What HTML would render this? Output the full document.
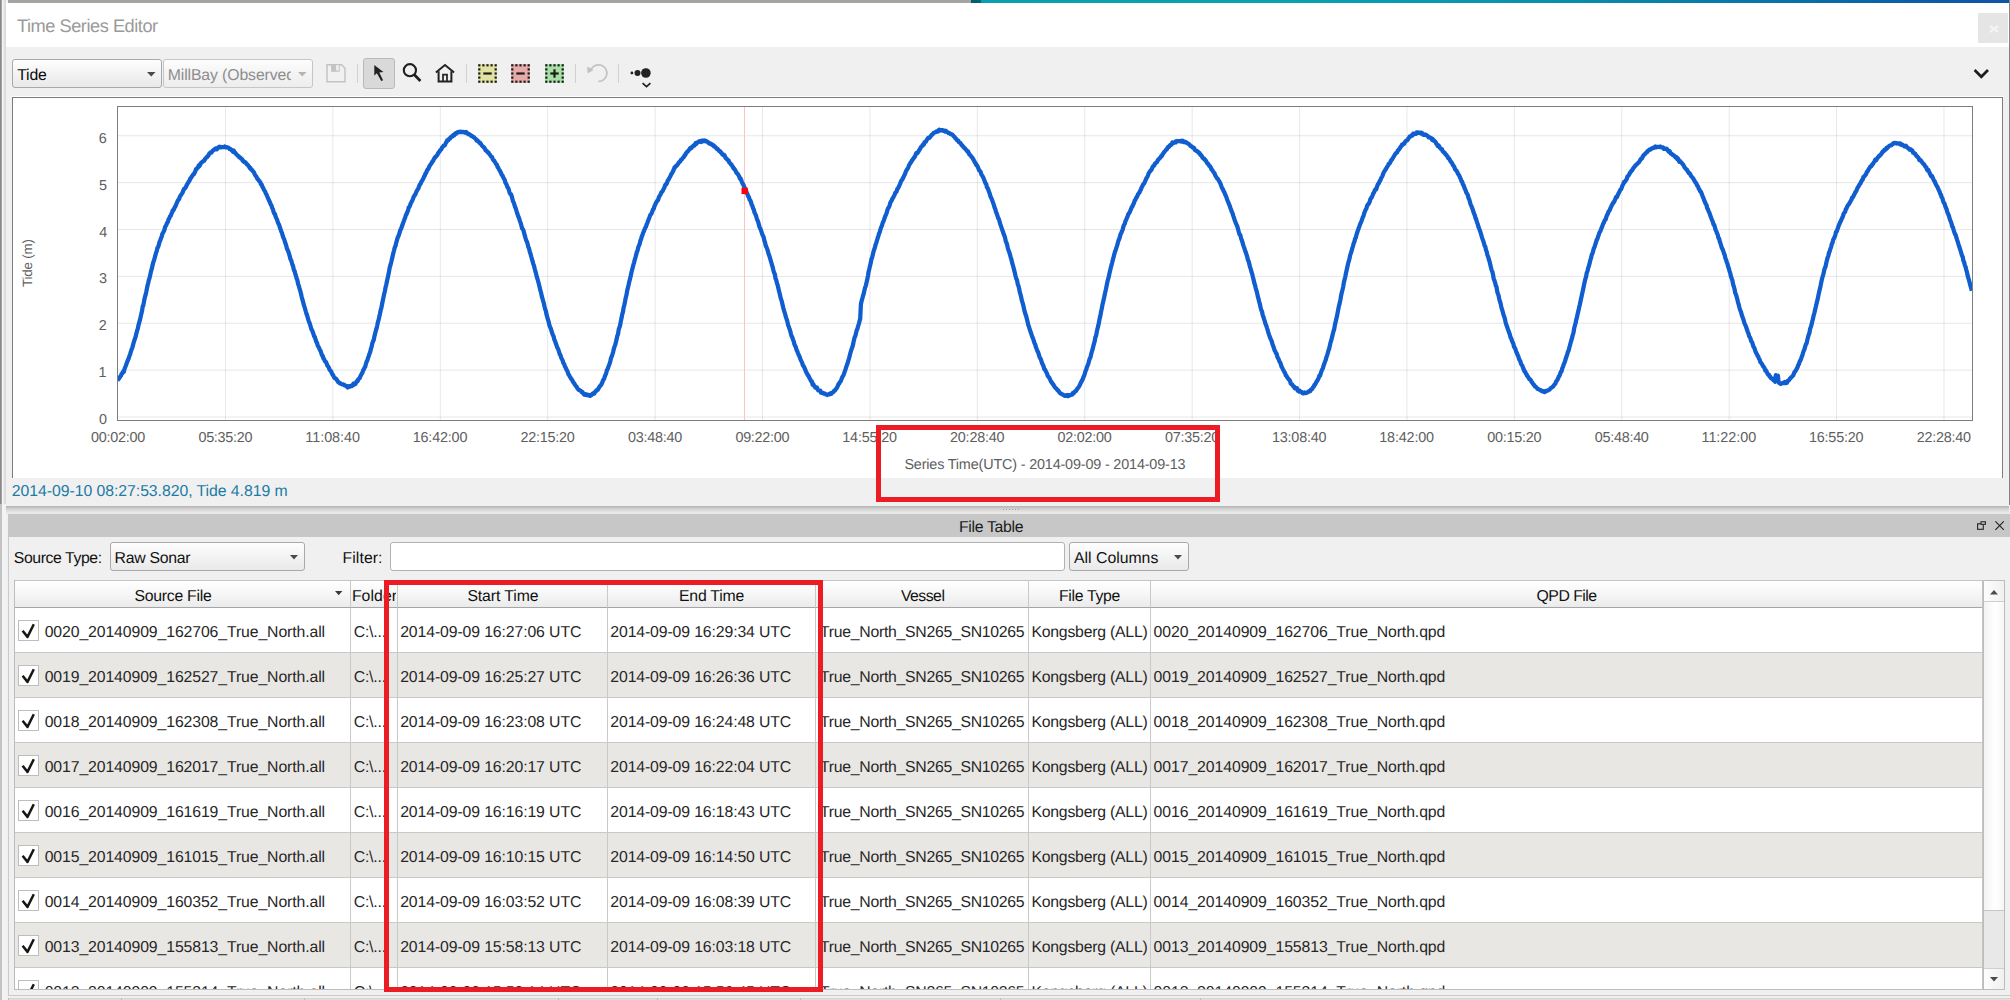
<!DOCTYPE html>
<html lang="en"><head><meta charset="utf-8"><title>Time Series Editor</title>
<style>
html,body{margin:0;padding:0;background:#f0f0f0;overflow:hidden;}
body{width:2010px;height:1000px;overflow:hidden;font-family:"Liberation Sans", sans-serif;text-rendering:geometricPrecision;}
#root{position:relative;width:2010px;height:1000px;overflow:hidden;background:#f0f0f0;}
#root div,#root span,#root svg{box-sizing:border-box;}
.combo{position:absolute;border:1px solid #a9a9a9;border-radius:3px;background:linear-gradient(#fefefe,#f3f3f3 50%,#e9e9e9);}
.hdr{position:absolute;top:580px;height:28px;background:linear-gradient(#ffffff,#f6f6f6 50%,#ebebeb);border-right:1px solid #c9c9c9;border-bottom:1px solid #a5a5a5;border-top:1px solid #c4c4c4;}
.row{position:absolute;left:15px;width:1968px;height:45px;border-bottom:1px solid #c8c8c8;}
.vl{position:absolute;top:608px;width:1px;height:381px;background:#c9c9c9;}
.cb{position:absolute;left:18px;width:21px;height:21px;background:#fff;border:1px solid #bdbdbd;}
</style></head><body><div id="root">
<div style="position:absolute;left:0px;top:0px;width:1px;height:504px;background:#8a8a8a;"></div>
<div style="position:absolute;left:1px;top:0px;width:1px;height:504px;background:#a0a0a0;"></div>
<div style="position:absolute;left:2px;top:0px;width:4px;height:504px;background:linear-gradient(90deg,#fbfbfb,#ececec 35%,#e0e0e0 65%,#d6d6d6);"></div>
<div style="position:absolute;left:0px;top:504px;width:2px;height:496px;background:#c4c4c4;"></div>
<div style="position:absolute;left:2px;top:504px;width:4px;height:496px;background:#f3f3f3;"></div>
<div style="position:absolute;left:6px;top:0px;width:2px;height:3px;background:#f4f4f4;"></div>
<div style="position:absolute;left:8px;top:0px;width:963px;height:3px;background:#a3a6a0;"></div>
<div style="position:absolute;left:971px;top:0px;width:1039px;height:3px;background:linear-gradient(90deg,#015f6f 0,#015f6f 0.9%,#0a9fb0 1%,#08a2b2 30%,#0a90ac 55%,#0872a8 78%,#0c5ca6 92%,#1254a4 100%);"></div>
<div style="position:absolute;left:2009px;top:0px;width:1px;height:505px;background:#868686;"></div>
<div style="position:absolute;left:6px;top:3px;width:2003px;height:44px;background:#ffffff;"></div>
<span style="position:absolute;left:17.0px;top:16.00px;font-size:18.2px;line-height:20px;color:#9a9a9a;white-space:pre;letter-spacing:-0.455px;">Time Series Editor</span>
<div style="position:absolute;left:1978px;top:13px;width:30px;height:30px;background:#e5e5e5;"></div>
<svg style="position:absolute;left:1987.5px;top:22.5px" width="12" height="12" viewBox="0 0 12 12"><path d="M1.9 2.9L10.1 9.1M10.1 2.9L1.9 9.1" stroke="#f4f4f4" stroke-width="2" fill="none"/></svg>
<div class="combo" style="left:12px;top:59px;width:150px;height:29px;"></div>
<span style="position:absolute;left:17.3px;top:66.00px;font-size:15.8px;line-height:20px;color:#0a0a0a;white-space:pre;letter-spacing:-0.235px;">Tide</span>
<svg style="position:absolute;left:146.75px;top:71.7px;overflow:visible" width="8.5" height="4.6" viewBox="0 0 8.5 4.6"><path d="M0 0H8.5L4.25 4.6Z" fill="#4a4a4a"/></svg>
<div class="combo" style="left:163px;top:59px;width:150px;height:29px;border-color:#c6c6c6;background:linear-gradient(#fdfdfd,#f4f4f4 50%,#ededed);"></div>
<div style="position:absolute;left:168px;top:62px;width:123.3px;height:24px;overflow:hidden;"><span style="position:absolute;left:-0.3px;top:4.00px;font-size:15.8px;line-height:20px;color:#8d8d8d;white-space:pre;letter-spacing:-0.113px;">MillBay (Observed)</span></div>
<svg style="position:absolute;left:297.75px;top:71.7px;overflow:visible" width="8.5" height="4.6" viewBox="0 0 8.5 4.6"><path d="M0 0H8.5L4.25 4.6Z" fill="#b4b4b4"/></svg>
<svg style="position:absolute;left:326px;top:64px;overflow:visible" width="20" height="18" viewBox="0 0 20 18"><path d="M1 0.8H15.6L19 4.2V17.8H1Z" fill="#f1f1f1" stroke="#c3c3c3" stroke-width="1.5"/><rect x="5.1" y="0.8" width="8.6" height="7" fill="#c4c4c4"/><rect x="10.2" y="1.2" width="2.5" height="5.3" fill="#f3f3f3"/></svg>
<div style="position:absolute;left:357px;top:64px;width:1px;height:19px;background:#d0d0d0;"></div>
<div style="position:absolute;left:363px;top:58px;width:32px;height:31px;background:#d9d9d9;border:1px solid #b9b9b9;border-radius:3px;"></div>
<svg style="position:absolute;left:372px;top:64px;overflow:visible" width="13" height="18" viewBox="0 0 13 18"><path d="M2.3 0.9V11.6L4.9 9.2L9.2 17.1L11.1 16.2L7.3 8.6L11.4 8.1Z" fill="#222"/></svg>
<svg style="position:absolute;left:402px;top:63px;overflow:visible" width="20" height="20" viewBox="0 0 20 20"><circle cx="7.9" cy="7.2" r="6.1" fill="none" stroke="#1f1f1f" stroke-width="2.1"/><path d="M12.4 11.8L18.4 18" stroke="#1f1f1f" stroke-width="2.7" fill="none"/></svg>
<svg style="position:absolute;left:435px;top:63px;overflow:visible" width="20" height="20" viewBox="0 0 20 20"><path d="M0.9 9.6L10 2.1L19.1 9.6" fill="none" stroke="#222" stroke-width="1.9"/><path d="M3.6 8.2V18.4H16.4V8.2" fill="none" stroke="#222" stroke-width="2"/><path d="M8 18.4V11.7H12V18.4" fill="none" stroke="#222" stroke-width="1.7"/></svg>
<div style="position:absolute;left:466px;top:64px;width:1px;height:19px;background:#d0d0d0;"></div>
<svg style="position:absolute;left:478.4px;top:63.6px;overflow:visible" width="19" height="19" viewBox="0 0 19 19"><rect x="0.2" y="0.2" width="18.6" height="18.6" fill="#e1e1a3"/><rect x="0.2" y="0.2" width="2.2" height="2.2" fill="#1c1c1c"/><rect x="0.2" y="4.3" width="2.2" height="2.2" fill="#1c1c1c"/><rect x="0.2" y="8.4" width="2.2" height="2.2" fill="#1c1c1c"/><rect x="0.2" y="12.5" width="2.2" height="2.2" fill="#1c1c1c"/><rect x="0.2" y="16.6" width="2.2" height="2.2" fill="#1c1c1c"/><rect x="4.3" y="0.2" width="2.2" height="2.2" fill="#1c1c1c"/><rect x="4.3" y="16.6" width="2.2" height="2.2" fill="#1c1c1c"/><rect x="8.4" y="0.2" width="2.2" height="2.2" fill="#1c1c1c"/><rect x="8.4" y="16.6" width="2.2" height="2.2" fill="#1c1c1c"/><rect x="12.5" y="0.2" width="2.2" height="2.2" fill="#1c1c1c"/><rect x="12.5" y="16.6" width="2.2" height="2.2" fill="#1c1c1c"/><rect x="16.6" y="0.2" width="2.2" height="2.2" fill="#1c1c1c"/><rect x="16.6" y="4.3" width="2.2" height="2.2" fill="#1c1c1c"/><rect x="16.6" y="8.4" width="2.2" height="2.2" fill="#1c1c1c"/><rect x="16.6" y="12.5" width="2.2" height="2.2" fill="#1c1c1c"/><rect x="16.6" y="16.6" width="2.2" height="2.2" fill="#1c1c1c"/><path d="M5.3 9.5H13.7" stroke="#1c1c1c" stroke-width="2.2" fill="none"/></svg>
<svg style="position:absolute;left:511.4px;top:63.6px;overflow:visible" width="19" height="19" viewBox="0 0 19 19"><rect x="0.2" y="0.2" width="18.6" height="18.6" fill="#e8a9a9"/><rect x="0.2" y="0.2" width="2.2" height="2.2" fill="#1c1c1c"/><rect x="0.2" y="4.3" width="2.2" height="2.2" fill="#1c1c1c"/><rect x="0.2" y="8.4" width="2.2" height="2.2" fill="#1c1c1c"/><rect x="0.2" y="12.5" width="2.2" height="2.2" fill="#1c1c1c"/><rect x="0.2" y="16.6" width="2.2" height="2.2" fill="#1c1c1c"/><rect x="4.3" y="0.2" width="2.2" height="2.2" fill="#1c1c1c"/><rect x="4.3" y="16.6" width="2.2" height="2.2" fill="#1c1c1c"/><rect x="8.4" y="0.2" width="2.2" height="2.2" fill="#1c1c1c"/><rect x="8.4" y="16.6" width="2.2" height="2.2" fill="#1c1c1c"/><rect x="12.5" y="0.2" width="2.2" height="2.2" fill="#1c1c1c"/><rect x="12.5" y="16.6" width="2.2" height="2.2" fill="#1c1c1c"/><rect x="16.6" y="0.2" width="2.2" height="2.2" fill="#1c1c1c"/><rect x="16.6" y="4.3" width="2.2" height="2.2" fill="#1c1c1c"/><rect x="16.6" y="8.4" width="2.2" height="2.2" fill="#1c1c1c"/><rect x="16.6" y="12.5" width="2.2" height="2.2" fill="#1c1c1c"/><rect x="16.6" y="16.6" width="2.2" height="2.2" fill="#1c1c1c"/><path d="M5.3 9.5H13.7" stroke="#1c1c1c" stroke-width="2.2" fill="none"/></svg>
<svg style="position:absolute;left:544.6px;top:63.6px;overflow:visible" width="19" height="19" viewBox="0 0 19 19"><rect x="0.2" y="0.2" width="18.6" height="18.6" fill="#a6e0a6"/><rect x="0.2" y="0.2" width="2.2" height="2.2" fill="#1c1c1c"/><rect x="0.2" y="4.3" width="2.2" height="2.2" fill="#1c1c1c"/><rect x="0.2" y="8.4" width="2.2" height="2.2" fill="#1c1c1c"/><rect x="0.2" y="12.5" width="2.2" height="2.2" fill="#1c1c1c"/><rect x="0.2" y="16.6" width="2.2" height="2.2" fill="#1c1c1c"/><rect x="4.3" y="0.2" width="2.2" height="2.2" fill="#1c1c1c"/><rect x="4.3" y="16.6" width="2.2" height="2.2" fill="#1c1c1c"/><rect x="8.4" y="0.2" width="2.2" height="2.2" fill="#1c1c1c"/><rect x="8.4" y="16.6" width="2.2" height="2.2" fill="#1c1c1c"/><rect x="12.5" y="0.2" width="2.2" height="2.2" fill="#1c1c1c"/><rect x="12.5" y="16.6" width="2.2" height="2.2" fill="#1c1c1c"/><rect x="16.6" y="0.2" width="2.2" height="2.2" fill="#1c1c1c"/><rect x="16.6" y="4.3" width="2.2" height="2.2" fill="#1c1c1c"/><rect x="16.6" y="8.4" width="2.2" height="2.2" fill="#1c1c1c"/><rect x="16.6" y="12.5" width="2.2" height="2.2" fill="#1c1c1c"/><rect x="16.6" y="16.6" width="2.2" height="2.2" fill="#1c1c1c"/><path d="M5.3 9.5H13.7" stroke="#1c1c1c" stroke-width="2.2" fill="none"/><path d="M9.5 5.3V13.7" stroke="#1c1c1c" stroke-width="2.2" fill="none"/></svg>
<div style="position:absolute;left:575px;top:64px;width:1px;height:19px;background:#d0d0d0;"></div>
<svg style="position:absolute;left:586px;top:63px;overflow:visible" width="22" height="20" viewBox="0 0 22 20"><path d="M5.2 6.2A8.3 8.3 0 1 1 12.3 18.4" fill="none" stroke="#c1c1c1" stroke-width="1.7"/><path d="M1.2 3.6L1.6 10.5L7.6 6.9Z" fill="#c1c1c1"/></svg>
<div style="position:absolute;left:618px;top:64px;width:1px;height:19px;background:#d0d0d0;"></div>
<svg style="position:absolute;left:629px;top:66px;overflow:visible" width="24" height="22" viewBox="0 0 24 22"><circle cx="2.9" cy="7" r="1.4" fill="#222"/><circle cx="8.5" cy="7" r="3" fill="#222"/><circle cx="16.9" cy="7" r="4.8" fill="#222"/><path d="M13.6 17.2L17.5 20.6L21.4 17.2" fill="none" stroke="#1f1f1f" stroke-width="1.7"/></svg>
<svg style="position:absolute;left:1973px;top:68px;overflow:visible" width="17" height="12" viewBox="0 0 17 12"><path d="M1.6 2L8.3 8.8L15 2" fill="none" stroke="#1d1d1d" stroke-width="2.7"/></svg>
<div style="position:absolute;left:12px;top:96px;width:1992px;height:1px;background:#fff;"></div>
<div style="position:absolute;left:12px;top:97px;width:1991px;height:381px;background:#fff;border-top:1px solid #7a7a7a;border-left:1px solid #7a7a7a;border-right:1px solid #7e7e7e;"></div>
<svg style="position:absolute;left:0;top:0" width="2010" height="480" viewBox="0 0 2010 480"><path d="M117.5 417.000H1972.5" stroke="#000" stroke-opacity="0.095" stroke-width="1"/><path d="M117.5 370.125H1972.5" stroke="#000" stroke-opacity="0.095" stroke-width="1"/><path d="M117.5 323.250H1972.5" stroke="#000" stroke-opacity="0.095" stroke-width="1"/><path d="M117.5 276.375H1972.5" stroke="#000" stroke-opacity="0.095" stroke-width="1"/><path d="M117.5 229.500H1972.5" stroke="#000" stroke-opacity="0.095" stroke-width="1"/><path d="M117.5 182.625H1972.5" stroke="#000" stroke-opacity="0.095" stroke-width="1"/><path d="M117.5 135.750H1972.5" stroke="#000" stroke-opacity="0.095" stroke-width="1"/><path d="M225.496 106.5V420.5" stroke="#000" stroke-opacity="0.095" stroke-width="1"/><path d="M332.902 106.5V420.5" stroke="#000" stroke-opacity="0.095" stroke-width="1"/><path d="M440.308 106.5V420.5" stroke="#000" stroke-opacity="0.095" stroke-width="1"/><path d="M547.714 106.5V420.5" stroke="#000" stroke-opacity="0.095" stroke-width="1"/><path d="M655.120 106.5V420.5" stroke="#000" stroke-opacity="0.095" stroke-width="1"/><path d="M762.526 106.5V420.5" stroke="#000" stroke-opacity="0.095" stroke-width="1"/><path d="M869.932 106.5V420.5" stroke="#000" stroke-opacity="0.095" stroke-width="1"/><path d="M977.338 106.5V420.5" stroke="#000" stroke-opacity="0.095" stroke-width="1"/><path d="M1084.744 106.5V420.5" stroke="#000" stroke-opacity="0.095" stroke-width="1"/><path d="M1192.150 106.5V420.5" stroke="#000" stroke-opacity="0.095" stroke-width="1"/><path d="M1299.556 106.5V420.5" stroke="#000" stroke-opacity="0.095" stroke-width="1"/><path d="M1406.962 106.5V420.5" stroke="#000" stroke-opacity="0.095" stroke-width="1"/><path d="M1514.368 106.5V420.5" stroke="#000" stroke-opacity="0.095" stroke-width="1"/><path d="M1621.774 106.5V420.5" stroke="#000" stroke-opacity="0.095" stroke-width="1"/><path d="M1729.180 106.5V420.5" stroke="#000" stroke-opacity="0.095" stroke-width="1"/><path d="M1836.586 106.5V420.5" stroke="#000" stroke-opacity="0.095" stroke-width="1"/><path d="M1943.992 106.5V420.5" stroke="#000" stroke-opacity="0.095" stroke-width="1"/><path d="M744.5 106.5V420.5" stroke="#f8c4c4" stroke-width="1"/><rect x="117.5" y="106.5" width="1855.0" height="314.0" fill="none" stroke="#7d7d7d" stroke-width="1"/><clipPath id="pc"><rect x="118" y="107" width="1854" height="313"/></clipPath><path d="M117.5 381.0L118.2 378.4L118.9 378.8L119.6 377.5L120.3 376.5L121.0 375.6L121.7 373.7L122.4 373.2L123.1 371.6L123.8 371.9L124.5 369.1L125.2 367.2L125.9 365.5L126.6 363.6L127.3 361.6L128.0 359.9L128.7 358.3L129.4 356.0L130.1 354.4L130.8 351.8L131.5 349.7L132.2 348.2L132.9 345.5L133.6 342.8L134.3 340.6L135.0 338.5L135.7 336.6L136.4 333.2L137.1 330.7L137.8 328.6L138.5 325.1L139.2 322.5L139.9 320.2L140.6 317.1L141.3 313.9L142.0 311.1L142.7 306.5L143.4 305.0L144.1 301.0L144.8 297.5L145.5 295.2L146.2 292.2L146.9 288.6L147.6 285.2L148.3 282.6L149.0 279.6L149.7 277.3L150.4 274.1L151.1 271.1L151.8 268.7L152.5 265.5L153.2 262.6L153.9 260.8L154.6 258.3L155.3 255.6L156.0 253.0L156.7 251.2L157.4 247.9L158.1 247.1L158.8 244.9L159.5 241.9L160.2 240.6L160.9 238.3L161.6 237.1L162.3 234.0L163.0 232.7L163.7 231.5L164.4 230.0L165.1 226.9L165.8 225.9L166.5 224.6L167.2 222.6L167.9 222.0L168.6 219.3L169.3 218.4L170.0 216.3L170.7 215.9L171.4 213.8L172.1 212.3L172.8 210.3L173.5 210.3L174.2 208.5L174.9 207.1L175.6 205.9L176.3 204.2L177.0 202.4L177.7 201.0L178.4 199.6L179.1 199.2L179.8 196.7L180.5 195.8L181.2 194.6L181.9 193.6L182.6 192.5L183.3 190.5L184.0 189.1L184.7 188.6L185.4 187.9L186.1 186.5L186.8 185.0L187.5 183.6L188.2 182.7L188.9 181.3L189.6 180.5L190.3 178.6L191.0 177.9L191.7 176.6L192.4 175.7L193.1 174.5L193.8 174.4L194.5 172.8L195.2 171.8L195.9 169.3L196.6 169.0L197.3 168.0L198.0 167.5L198.7 165.4L199.4 166.0L200.1 165.1L200.8 163.3L201.5 162.6L202.2 161.9L202.9 161.4L203.6 160.8L204.3 160.6L205.0 158.9L205.7 158.4L206.4 157.4L207.1 157.2L207.8 156.0L208.5 155.5L209.2 153.7L209.9 153.3L210.6 152.3L211.3 152.6L212.0 151.7L212.7 150.7L213.4 150.0L214.1 149.9L214.8 149.0L215.5 148.5L216.2 148.7L216.9 149.2L217.6 147.8L218.3 147.4L219.0 146.9L219.7 146.7L220.4 147.4L221.1 147.4L221.8 147.0L222.5 147.1L223.2 147.1L223.9 147.1L224.6 146.5L225.3 147.0L226.0 147.4L226.7 147.2L227.4 147.5L228.1 147.6L228.8 148.1L229.5 149.0L230.2 148.8L230.9 149.4L231.6 150.2L232.3 150.7L233.0 151.7L233.7 150.6L234.4 152.5L235.1 152.6L235.8 153.5L236.5 154.4L237.2 155.2L237.9 155.8L238.6 156.1L239.3 157.4L240.0 157.3L240.7 158.0L241.4 159.0L242.1 159.1L242.8 160.9L243.5 161.1L244.2 162.2L244.9 162.0L245.6 162.5L246.3 163.5L247.0 164.5L247.7 164.7L248.4 165.9L249.1 166.5L249.8 168.1L250.5 168.0L251.2 169.6L251.9 169.8L252.6 170.7L253.3 171.7L254.0 172.5L254.7 174.1L255.4 175.5L256.1 176.2L256.8 177.5L257.5 179.0L258.2 179.5L258.9 180.6L259.6 181.5L260.3 182.1L261.0 184.3L261.7 184.5L262.4 186.8L263.1 187.8L263.8 189.6L264.5 190.5L265.2 191.7L265.9 193.6L266.6 194.7L267.3 196.5L268.0 198.1L268.7 199.7L269.4 201.3L270.1 202.7L270.8 204.6L271.5 205.5L272.2 208.0L272.9 209.3L273.6 212.0L274.3 213.7L275.0 214.1L275.7 216.8L276.4 218.4L277.1 219.8L277.8 222.3L278.5 223.7L279.2 225.0L279.9 227.5L280.6 229.5L281.3 231.6L282.0 233.0L282.7 235.7L283.4 237.8L284.1 239.0L284.8 241.3L285.5 243.6L286.2 245.4L286.9 248.5L287.6 249.9L288.3 251.5L289.0 253.7L289.7 256.1L290.4 259.1L291.1 260.2L291.8 262.5L292.5 264.8L293.2 266.8L293.9 270.0L294.6 271.0L295.3 273.9L296.0 276.0L296.7 278.6L297.4 280.3L298.1 284.0L298.8 285.8L299.5 288.4L300.2 290.6L300.9 293.3L301.6 296.4L302.3 299.2L303.0 301.6L303.7 304.4L304.4 306.6L305.1 308.8L305.8 311.5L306.5 313.8L307.2 315.8L307.9 318.3L308.6 320.7L309.3 322.4L310.0 324.2L310.7 326.7L311.4 329.2L312.1 330.2L312.8 332.2L313.5 334.1L314.2 336.5L314.9 337.0L315.6 339.7L316.3 341.9L317.0 342.8L317.7 345.4L318.4 346.7L319.1 347.9L319.8 349.9L320.5 350.8L321.2 352.7L321.9 355.3L322.6 355.6L323.3 358.2L324.0 358.9L324.7 360.7L325.4 361.7L326.1 362.1L326.8 364.2L327.5 365.8L328.2 366.5L328.9 367.7L329.6 369.7L330.3 370.5L331.0 371.2L331.7 372.8L332.4 374.6L333.1 375.1L333.8 376.8L334.5 378.0L335.2 378.3L335.9 378.7L336.6 379.4L337.3 380.7L338.0 381.8L338.7 382.2L339.4 382.9L340.1 383.0L340.8 383.8L341.5 384.0L342.2 384.4L342.9 384.4L343.6 384.6L344.3 385.3L345.0 385.3L345.7 385.6L346.4 386.4L347.1 386.2L347.8 387.5L348.5 386.7L349.2 386.1L349.9 386.6L350.6 386.2L351.3 385.6L352.0 386.1L352.7 385.0L353.4 383.6L354.1 384.7L354.8 383.5L355.5 383.8L356.2 382.1L356.9 381.1L357.6 381.3L358.3 379.2L359.0 378.7L359.7 378.1L360.4 376.3L361.1 374.9L361.8 373.6L362.5 372.5L363.2 370.2L363.9 369.2L364.6 367.5L365.3 366.5L366.0 363.6L366.7 361.5L367.4 360.2L368.1 357.7L368.8 355.9L369.5 353.7L370.2 351.9L370.9 348.9L371.6 346.8L372.3 343.3L373.0 341.5L373.7 340.0L374.4 336.4L375.1 333.7L375.8 330.8L376.5 328.7L377.2 325.6L377.9 322.1L378.6 319.9L379.3 316.6L380.0 313.7L380.7 310.0L381.4 307.8L382.1 304.0L382.8 300.5L383.5 297.1L384.2 293.9L384.9 291.0L385.6 287.2L386.3 284.5L387.0 281.0L387.7 278.1L388.4 274.6L389.1 271.1L389.8 267.2L390.5 265.0L391.2 262.2L391.9 259.1L392.6 256.4L393.3 253.2L394.0 250.6L394.7 247.7L395.4 246.2L396.1 243.3L396.8 240.7L397.5 238.1L398.2 236.5L398.9 235.0L399.6 232.6L400.3 230.1L401.0 229.0L401.7 227.1L402.4 225.0L403.1 223.0L403.8 221.3L404.5 219.2L405.2 217.5L405.9 215.0L406.6 214.2L407.3 211.9L408.0 210.9L408.7 207.4L409.4 206.9L410.1 205.4L410.8 203.2L411.5 202.0L412.2 200.6L412.9 199.0L413.6 197.1L414.3 195.8L415.0 194.9L415.7 193.6L416.4 191.8L417.1 190.4L417.8 189.2L418.5 188.2L419.2 186.0L419.9 184.5L420.6 183.8L421.3 181.9L422.0 180.8L422.7 179.7L423.4 178.4L424.1 176.4L424.8 175.8L425.5 173.3L426.2 172.9L426.9 170.7L427.6 169.4L428.3 168.9L429.0 167.2L429.7 165.8L430.4 164.7L431.1 163.9L431.8 162.6L432.5 161.4L433.2 160.8L433.9 159.0L434.6 158.1L435.3 157.0L436.0 156.7L436.7 155.6L437.4 154.8L438.1 153.2L438.8 152.2L439.5 151.6L440.2 150.1L440.9 149.7L441.6 148.7L442.3 147.2L443.0 146.5L443.7 145.5L444.4 145.4L445.1 144.9L445.8 142.9L446.5 142.1L447.2 140.4L447.9 140.6L448.6 139.8L449.3 138.6L450.0 138.7L450.7 137.1L451.4 137.0L452.1 136.6L452.8 135.4L453.5 135.7L454.2 135.3L454.9 133.7L455.6 133.2L456.3 133.6L457.0 133.0L457.7 132.1L458.4 132.2L459.1 132.0L459.8 131.7L460.5 132.0L461.2 131.7L461.9 132.2L462.6 132.1L463.3 131.9L464.0 132.2L464.7 132.5L465.4 132.5L466.1 132.0L466.8 133.1L467.5 133.2L468.2 134.2L468.9 133.9L469.6 134.6L470.3 134.9L471.0 135.9L471.7 135.8L472.4 136.1L473.1 136.9L473.8 137.1L474.5 137.9L475.2 138.4L475.9 139.2L476.6 140.5L477.3 140.2L478.0 141.1L478.7 141.7L479.4 142.8L480.1 142.8L480.8 143.8L481.5 144.9L482.2 145.9L482.9 146.5L483.6 147.1L484.3 147.7L485.0 149.1L485.7 150.4L486.4 150.7L487.1 151.5L487.8 152.4L488.5 152.6L489.2 153.8L489.9 154.6L490.6 155.8L491.3 156.6L492.0 157.0L492.7 159.0L493.4 160.2L494.1 160.5L494.8 161.9L495.5 162.9L496.2 164.3L496.9 164.6L497.6 167.2L498.3 167.6L499.0 169.6L499.7 170.4L500.4 171.6L501.1 173.1L501.8 174.9L502.5 175.6L503.2 177.2L503.9 178.6L504.6 179.6L505.3 182.4L506.0 183.6L506.7 184.9L507.4 187.0L508.1 187.8L508.8 189.8L509.5 192.3L510.2 193.8L510.9 194.3L511.6 195.7L512.3 198.5L513.0 201.3L513.7 202.6L514.4 204.7L515.1 207.1L515.8 208.5L516.5 211.0L517.2 213.3L517.9 215.2L518.6 217.2L519.3 218.8L520.0 221.4L520.7 223.0L521.4 225.8L522.1 228.4L522.8 229.1L523.5 230.6L524.2 233.4L524.9 235.9L525.6 238.3L526.3 240.5L527.0 241.9L527.7 244.2L528.4 247.3L529.1 248.6L529.8 251.9L530.5 253.7L531.2 256.5L531.9 258.9L532.6 261.4L533.3 263.9L534.0 265.7L534.7 268.7L535.4 271.2L536.1 273.9L536.8 277.0L537.5 279.0L538.2 281.5L538.9 284.2L539.6 287.1L540.3 290.2L541.0 292.3L541.7 295.9L542.4 298.3L543.1 300.8L543.8 303.1L544.5 306.5L545.2 309.3L545.9 311.0L546.6 314.8L547.3 317.6L548.0 319.5L548.7 322.0L549.4 325.2L550.1 327.1L550.8 328.5L551.5 331.0L552.2 333.1L552.9 335.2L553.6 336.3L554.3 339.6L555.0 340.9L555.7 343.1L556.4 344.9L557.1 347.1L557.8 348.4L558.5 350.0L559.2 352.3L559.9 354.5L560.6 355.5L561.3 358.0L562.0 359.2L562.7 360.6L563.4 363.2L564.1 363.8L564.8 366.3L565.5 367.2L566.2 369.2L566.9 370.1L567.6 371.7L568.3 374.0L569.0 375.0L569.7 376.3L570.4 377.4L571.1 379.0L571.8 379.4L572.5 380.7L573.2 382.2L573.9 382.9L574.6 384.0L575.3 385.2L576.0 386.1L576.7 386.9L577.4 388.5L578.1 389.1L578.8 389.9L579.5 390.1L580.2 390.6L580.9 390.9L581.6 392.0L582.3 391.8L583.0 392.9L583.7 394.0L584.4 394.7L585.1 394.8L585.8 394.3L586.5 395.0L587.2 394.6L587.9 395.3L588.6 394.9L589.3 395.2L590.0 395.8L590.7 394.9L591.4 395.3L592.1 394.1L592.8 393.5L593.5 393.8L594.2 393.5L594.9 392.0L595.6 391.7L596.3 390.4L597.0 390.2L597.7 389.9L598.4 388.6L599.1 387.5L599.8 386.1L600.5 385.7L601.2 384.7L601.9 383.3L602.6 381.7L603.3 379.6L604.0 379.3L604.7 376.8L605.4 375.0L606.1 373.6L606.8 370.5L607.5 369.4L608.2 367.4L608.9 365.5L609.6 363.8L610.3 361.3L611.0 358.1L611.7 356.5L612.4 354.4L613.1 352.1L613.8 349.1L614.5 346.5L615.2 344.9L615.9 342.2L616.6 339.3L617.3 335.8L618.0 334.4L618.7 329.5L619.4 327.6L620.1 325.5L620.8 321.4L621.5 318.3L622.2 314.4L622.9 312.2L623.6 307.7L624.3 305.0L625.0 301.7L625.7 297.8L626.4 295.3L627.1 291.1L627.8 288.2L628.5 285.3L629.2 282.0L629.9 279.4L630.6 276.6L631.3 273.1L632.0 270.2L632.7 267.4L633.4 264.7L634.1 262.6L634.8 259.6L635.5 257.3L636.2 254.6L636.9 251.9L637.6 250.3L638.3 247.2L639.0 245.5L639.7 243.9L640.4 240.7L641.1 239.1L641.8 236.4L642.5 234.9L643.2 232.6L643.9 231.2L644.6 229.3L645.3 227.8L646.0 226.6L646.7 224.3L647.4 222.8L648.1 220.8L648.8 219.0L649.5 217.2L650.2 215.1L650.9 214.3L651.6 213.4L652.3 211.4L653.0 209.4L653.7 208.8L654.4 206.4L655.1 204.9L655.8 203.2L656.5 201.9L657.2 200.8L657.9 200.4L658.6 198.1L659.3 196.4L660.0 195.3L660.7 194.1L661.4 192.2L662.1 191.7L662.8 190.7L663.5 189.2L664.2 188.0L664.9 185.9L665.6 184.4L666.3 184.4L667.0 183.0L667.7 180.5L668.4 179.9L669.1 178.5L669.8 177.3L670.5 175.9L671.2 174.3L671.9 173.3L672.6 172.1L673.3 170.8L674.0 168.8L674.7 167.2L675.4 167.1L676.1 165.7L676.8 165.5L677.5 164.7L678.2 163.6L678.9 162.5L679.6 161.8L680.3 161.4L681.0 159.7L681.7 159.6L682.4 158.6L683.1 157.6L683.8 157.2L684.5 155.4L685.2 155.2L685.9 153.5L686.6 152.7L687.3 151.7L688.0 151.4L688.7 150.0L689.4 149.6L690.1 148.2L690.8 148.4L691.5 148.0L692.2 146.6L692.9 146.5L693.6 145.5L694.3 145.6L695.0 144.2L695.7 143.1L696.4 143.9L697.1 142.9L697.8 142.1L698.5 142.0L699.2 141.3L699.9 141.7L700.6 141.1L701.3 142.0L702.0 141.6L702.7 140.5L703.4 140.6L704.1 141.0L704.8 140.5L705.5 141.3L706.2 141.5L706.9 141.4L707.6 141.8L708.3 142.5L709.0 143.3L709.7 143.7L710.4 143.5L711.1 144.3L711.8 144.1L712.5 145.2L713.2 145.1L713.9 146.4L714.6 146.2L715.3 146.9L716.0 147.9L716.7 148.8L717.4 148.6L718.1 149.6L718.8 150.5L719.5 151.2L720.2 151.4L720.9 152.5L721.6 153.0L722.3 154.4L723.0 154.8L723.7 154.7L724.4 155.1L725.1 156.9L725.8 158.1L726.5 158.5L727.2 159.7L727.9 160.0L728.6 160.5L729.3 162.4L730.0 163.0L730.7 164.2L731.4 164.3L732.1 166.0L732.8 166.7L733.5 168.3L734.2 168.7L734.9 169.7L735.6 170.8L736.3 172.6L737.0 173.2L737.7 174.0L738.4 175.0L739.1 176.2L739.8 178.5L740.5 178.4L741.2 180.1L741.9 182.0L742.6 183.6L743.3 184.5L744.0 186.4L744.7 187.9L745.4 189.5L746.1 190.7L746.8 193.0L747.5 194.1L748.2 196.3L748.9 197.0L749.6 199.6L750.3 200.4L751.0 202.1L751.7 204.7L752.4 206.0L753.1 208.4L753.8 209.6L754.5 212.6L755.2 213.8L755.9 215.3L756.6 217.8L757.3 220.0L758.0 221.3L758.7 223.9L759.4 226.6L760.1 228.1L760.8 229.8L761.5 231.7L762.2 234.3L762.9 235.6L763.6 237.0L764.3 240.2L765.0 242.2L765.7 245.5L766.4 247.0L767.1 248.7L767.8 250.8L768.5 253.7L769.2 255.3L769.9 257.7L770.6 260.1L771.3 262.5L772.0 264.8L772.7 267.2L773.4 270.2L774.1 272.8L774.8 273.9L775.5 278.3L776.2 279.9L776.9 283.0L777.6 284.9L778.3 288.1L779.0 290.9L779.7 293.6L780.4 296.7L781.1 299.4L781.8 301.4L782.5 304.5L783.2 307.5L783.9 310.2L784.6 312.3L785.3 314.8L786.0 317.4L786.7 319.4L787.4 321.7L788.1 325.2L788.8 326.6L789.5 329.0L790.2 330.8L790.9 333.8L791.6 336.1L792.3 337.3L793.0 339.7L793.7 341.1L794.4 344.2L795.1 345.8L795.8 346.9L796.5 349.7L797.2 351.1L797.9 353.0L798.6 354.7L799.3 356.0L800.0 357.8L800.7 359.9L801.4 361.3L802.1 362.5L802.8 365.3L803.5 365.9L804.2 367.3L804.9 368.7L805.6 370.7L806.3 372.3L807.0 373.4L807.7 375.1L808.4 375.4L809.1 377.2L809.8 378.5L810.5 379.9L811.2 381.3L811.9 381.4L812.6 384.7L813.3 384.1L814.0 385.6L814.7 386.7L815.4 387.6L816.1 388.1L816.8 387.5L817.5 389.0L818.2 390.4L818.9 390.3L819.6 390.8L820.3 390.7L821.0 392.7L821.7 392.8L822.4 392.6L823.1 393.3L823.8 393.6L824.5 393.4L825.2 394.0L825.9 394.4L826.6 394.6L827.3 395.0L828.0 394.4L828.7 394.1L829.4 394.3L830.1 393.7L830.8 393.1L831.5 393.7L832.2 392.6L832.9 392.3L833.6 391.9L834.3 390.5L835.0 390.4L835.7 389.5L836.4 388.3L837.1 387.5L837.8 385.9L838.5 384.1L839.2 383.6L839.9 382.0L840.6 381.4L841.3 379.7L842.0 377.8L842.7 376.4L843.4 375.3L844.1 373.4L844.8 371.3L845.5 369.4L846.2 367.1L846.9 365.1L847.6 363.3L848.3 360.7L849.0 358.6L849.7 355.7L850.4 353.0L851.1 350.5L851.8 348.5L852.5 346.6L853.2 343.9L853.9 340.2L854.6 337.4L855.3 336.0L856.0 333.4L856.7 330.3L857.4 328.9L858.1 326.1L858.8 324.1L859.5 321.2L860.2 318.9L860.9 304.2L861.6 301.0L862.3 298.7L863.0 295.8L863.7 293.8L864.4 290.4L865.1 287.5L865.8 285.8L866.5 282.8L867.2 279.6L867.9 276.1L868.6 271.8L869.3 269.0L870.0 265.9L870.7 263.1L871.4 259.3L872.1 257.4L872.8 254.8L873.5 251.6L874.2 249.5L874.9 247.5L875.6 244.6L876.3 242.7L877.0 240.4L877.7 238.0L878.4 235.8L879.1 233.4L879.8 232.0L880.5 229.3L881.2 227.1L881.9 225.7L882.6 223.2L883.3 221.7L884.0 220.0L884.7 217.7L885.4 215.8L886.1 214.3L886.8 212.4L887.5 209.7L888.2 208.0L888.9 207.4L889.6 205.4L890.3 202.7L891.0 201.5L891.7 200.5L892.4 198.6L893.1 197.8L893.8 196.2L894.5 195.0L895.2 192.9L895.9 192.3L896.6 191.5L897.3 188.9L898.0 188.4L898.7 186.9L899.4 185.4L900.1 183.7L900.8 181.8L901.5 180.5L902.2 179.7L902.9 178.3L903.6 177.0L904.3 175.4L905.0 174.0L905.7 172.0L906.4 170.3L907.1 169.5L907.8 168.3L908.5 166.8L909.2 164.9L909.9 164.0L910.6 162.4L911.3 161.9L912.0 160.3L912.7 159.5L913.4 158.6L914.1 157.4L914.8 156.9L915.5 154.8L916.2 153.3L916.9 153.6L917.6 152.8L918.3 151.8L919.0 150.3L919.7 149.5L920.4 148.3L921.1 146.8L921.8 146.2L922.5 145.7L923.2 144.3L923.9 144.5L924.6 142.2L925.3 141.8L926.0 141.6L926.7 140.0L927.4 139.0L928.1 138.1L928.8 137.6L929.5 137.8L930.2 136.7L930.9 136.0L931.6 134.9L932.3 134.8L933.0 133.9L933.7 132.9L934.4 132.5L935.1 132.3L935.8 132.2L936.5 131.3L937.2 131.2L937.9 131.5L938.6 130.1L939.3 129.7L940.0 130.6L940.7 130.3L941.4 130.1L942.1 130.3L942.8 130.2L943.5 130.8L944.2 130.6L944.9 131.4L945.6 130.8L946.3 131.3L947.0 132.0L947.7 132.2L948.4 133.0L949.1 133.1L949.8 133.3L950.5 134.1L951.2 134.2L951.9 134.3L952.6 135.0L953.3 135.7L954.0 136.4L954.7 137.2L955.4 138.2L956.1 138.7L956.8 139.9L957.5 140.4L958.2 140.6L958.9 142.1L959.6 142.7L960.3 142.8L961.0 143.9L961.7 145.1L962.4 145.5L963.1 146.7L963.8 147.2L964.5 148.2L965.2 148.6L965.9 149.7L966.6 150.2L967.3 151.5L968.0 151.4L968.7 153.1L969.4 154.4L970.1 155.1L970.8 155.8L971.5 157.0L972.2 157.5L972.9 158.6L973.6 159.9L974.3 161.1L975.0 162.7L975.7 163.2L976.4 165.2L977.1 165.4L977.8 167.0L978.5 168.6L979.2 170.4L979.9 171.0L980.6 171.7L981.3 174.2L982.0 175.4L982.7 176.4L983.4 177.9L984.1 179.5L984.8 181.4L985.5 183.2L986.2 183.9L986.9 187.2L987.6 187.9L988.3 189.6L989.0 191.8L989.7 193.5L990.4 196.3L991.1 197.7L991.8 199.1L992.5 201.1L993.2 203.1L993.9 205.2L994.6 207.6L995.3 209.1L996.0 212.1L996.7 213.4L997.4 215.5L998.1 218.0L998.8 218.8L999.5 221.3L1000.2 224.0L1000.9 225.8L1001.6 227.9L1002.3 230.1L1003.0 231.8L1003.7 234.1L1004.4 235.8L1005.1 237.8L1005.8 241.4L1006.5 242.7L1007.2 245.1L1007.9 248.3L1008.6 250.5L1009.3 252.3L1010.0 254.7L1010.7 257.3L1011.4 259.5L1012.1 262.6L1012.8 265.0L1013.5 267.5L1014.2 270.4L1014.9 273.0L1015.6 276.2L1016.3 278.7L1017.0 280.1L1017.7 283.9L1018.4 285.8L1019.1 288.5L1019.8 292.2L1020.5 294.4L1021.2 297.3L1021.9 300.7L1022.6 302.8L1023.3 305.4L1024.0 308.7L1024.7 311.7L1025.4 314.1L1026.1 315.8L1026.8 318.7L1027.5 321.4L1028.2 324.7L1028.9 326.6L1029.6 328.9L1030.3 331.2L1031.0 332.8L1031.7 335.2L1032.4 337.3L1033.1 338.6L1033.8 341.0L1034.5 343.2L1035.2 344.4L1035.9 347.1L1036.6 348.9L1037.3 350.9L1038.0 352.0L1038.7 354.2L1039.4 356.6L1040.1 358.1L1040.8 359.2L1041.5 361.4L1042.2 363.6L1042.9 364.7L1043.6 366.6L1044.3 369.1L1045.0 369.6L1045.7 371.1L1046.4 372.3L1047.1 373.8L1047.8 376.1L1048.5 376.8L1049.2 377.6L1049.9 379.0L1050.6 380.6L1051.3 382.0L1052.0 382.5L1052.7 384.1L1053.4 384.6L1054.1 386.0L1054.8 387.0L1055.5 387.9L1056.2 388.4L1056.9 389.3L1057.6 390.4L1058.3 390.4L1059.0 391.7L1059.7 392.6L1060.4 393.4L1061.1 393.6L1061.8 394.0L1062.5 394.6L1063.2 394.7L1063.9 395.2L1064.6 395.7L1065.3 395.9L1066.0 395.4L1066.7 395.8L1067.4 395.0L1068.1 396.2L1068.8 395.5L1069.5 395.6L1070.2 394.8L1070.9 394.9L1071.6 394.7L1072.3 394.5L1073.0 393.0L1073.7 393.4L1074.4 392.4L1075.1 391.4L1075.8 391.2L1076.5 390.0L1077.2 389.1L1077.9 387.9L1078.6 387.2L1079.3 386.0L1080.0 384.6L1080.7 382.9L1081.4 381.6L1082.1 380.4L1082.8 379.1L1083.5 376.9L1084.2 375.7L1084.9 373.2L1085.6 370.8L1086.3 369.5L1087.0 366.8L1087.7 365.3L1088.4 363.4L1089.1 360.6L1089.8 358.5L1090.5 357.2L1091.2 353.9L1091.9 351.5L1092.6 349.2L1093.3 346.3L1094.0 343.6L1094.7 341.1L1095.4 337.1L1096.1 335.7L1096.8 331.7L1097.5 328.6L1098.2 326.1L1098.9 322.6L1099.6 318.8L1100.3 316.1L1101.0 312.1L1101.7 308.9L1102.4 305.1L1103.1 302.0L1103.8 299.1L1104.5 295.7L1105.2 292.4L1105.9 289.4L1106.6 285.8L1107.3 282.3L1108.0 279.4L1108.7 277.2L1109.4 273.5L1110.1 270.7L1110.8 267.7L1111.5 265.1L1112.2 262.5L1112.9 259.6L1113.6 257.0L1114.3 254.3L1115.0 251.8L1115.7 249.9L1116.4 247.7L1117.1 245.6L1117.8 243.0L1118.5 240.5L1119.2 239.0L1119.9 236.9L1120.6 234.0L1121.3 233.0L1122.0 231.0L1122.7 229.6L1123.4 226.6L1124.1 224.7L1124.8 223.8L1125.5 221.0L1126.2 219.7L1126.9 217.9L1127.6 216.3L1128.3 214.3L1129.0 213.3L1129.7 212.3L1130.4 210.5L1131.1 208.9L1131.8 207.0L1132.5 206.3L1133.2 204.4L1133.9 203.2L1134.6 200.7L1135.3 200.1L1136.0 198.1L1136.7 197.4L1137.4 195.9L1138.1 194.1L1138.8 193.3L1139.5 192.4L1140.2 190.8L1140.9 189.5L1141.6 187.5L1142.3 186.3L1143.0 184.7L1143.7 183.9L1144.4 183.0L1145.1 181.3L1145.8 179.7L1146.5 177.9L1147.2 177.2L1147.9 175.5L1148.6 173.5L1149.3 172.3L1150.0 171.6L1150.7 170.1L1151.4 170.0L1152.1 168.2L1152.8 166.6L1153.5 165.8L1154.2 165.7L1154.9 163.6L1155.6 163.4L1156.3 162.4L1157.0 161.9L1157.7 160.6L1158.4 159.4L1159.1 158.9L1159.8 157.9L1160.5 157.4L1161.2 156.0L1161.9 156.0L1162.6 154.2L1163.3 153.5L1164.0 152.2L1164.7 151.6L1165.4 150.6L1166.1 149.8L1166.8 149.3L1167.5 147.8L1168.2 146.9L1168.9 147.0L1169.6 145.7L1170.3 144.9L1171.0 145.0L1171.7 144.3L1172.4 142.4L1173.1 142.9L1173.8 143.0L1174.5 142.6L1175.2 141.7L1175.9 142.3L1176.6 141.1L1177.3 141.1L1178.0 141.1L1178.7 141.0L1179.4 141.2L1180.1 141.3L1180.8 140.9L1181.5 141.5L1182.2 140.7L1182.9 141.1L1183.6 142.1L1184.3 141.6L1185.0 142.3L1185.7 142.0L1186.4 142.4L1187.1 142.9L1187.8 143.4L1188.5 143.7L1189.2 144.4L1189.9 145.2L1190.6 146.0L1191.3 146.1L1192.0 146.9L1192.7 147.6L1193.4 147.4L1194.1 147.9L1194.8 149.8L1195.5 150.4L1196.2 150.5L1196.9 151.3L1197.6 151.4L1198.3 151.9L1199.0 153.2L1199.7 153.2L1200.4 154.9L1201.1 155.0L1201.8 156.1L1202.5 157.6L1203.2 158.4L1203.9 158.3L1204.6 159.7L1205.3 159.8L1206.0 160.9L1206.7 162.2L1207.4 163.6L1208.1 163.7L1208.8 165.2L1209.5 166.0L1210.2 166.4L1210.9 167.9L1211.6 169.6L1212.3 170.0L1213.0 171.3L1213.7 172.5L1214.4 173.0L1215.1 174.9L1215.8 176.2L1216.5 177.4L1217.2 178.5L1217.9 179.0L1218.6 180.2L1219.3 181.4L1220.0 182.8L1220.7 184.2L1221.4 186.5L1222.1 188.2L1222.8 188.9L1223.5 191.1L1224.2 191.8L1224.9 193.9L1225.6 195.3L1226.3 196.8L1227.0 199.3L1227.7 201.0L1228.4 202.6L1229.1 204.4L1229.8 206.0L1230.5 208.2L1231.2 209.9L1231.9 212.1L1232.6 213.4L1233.3 215.9L1234.0 217.9L1234.7 220.2L1235.4 222.0L1236.1 223.7L1236.8 225.3L1237.5 226.9L1238.2 229.7L1238.9 232.4L1239.6 234.6L1240.3 234.9L1241.0 237.8L1241.7 240.1L1242.4 241.9L1243.1 244.6L1243.8 246.7L1244.5 248.6L1245.2 251.0L1245.9 252.5L1246.6 254.9L1247.3 257.2L1248.0 260.2L1248.7 261.4L1249.4 264.4L1250.1 267.1L1250.8 269.2L1251.5 272.0L1252.2 273.9L1252.9 277.0L1253.6 279.8L1254.3 283.0L1255.0 285.1L1255.7 288.1L1256.4 290.3L1257.1 293.1L1257.8 296.4L1258.5 298.8L1259.2 301.8L1259.9 304.2L1260.6 307.5L1261.3 310.2L1262.0 311.4L1262.7 315.0L1263.4 316.8L1264.1 319.2L1264.8 321.3L1265.5 323.9L1266.2 325.3L1266.9 327.7L1267.6 329.8L1268.3 332.3L1269.0 334.6L1269.7 336.6L1270.4 338.4L1271.1 340.0L1271.8 341.4L1272.5 344.3L1273.2 346.1L1273.9 348.0L1274.6 350.3L1275.3 351.4L1276.0 353.2L1276.7 354.0L1277.4 356.9L1278.1 358.3L1278.8 359.6L1279.5 361.7L1280.2 362.6L1280.9 364.4L1281.6 366.9L1282.3 367.9L1283.0 369.4L1283.7 370.7L1284.4 372.1L1285.1 373.2L1285.8 375.4L1286.5 375.8L1287.2 377.4L1287.9 378.2L1288.6 379.3L1289.3 379.6L1290.0 380.9L1290.7 383.4L1291.4 384.3L1292.1 384.4L1292.8 385.4L1293.5 386.5L1294.2 386.6L1294.9 388.4L1295.6 387.9L1296.3 388.6L1297.0 388.3L1297.7 390.6L1298.4 390.4L1299.1 391.5L1299.8 390.8L1300.5 391.7L1301.2 391.9L1301.9 392.2L1302.6 393.2L1303.3 393.4L1304.0 393.2L1304.7 392.5L1305.4 393.0L1306.1 393.1L1306.8 392.6L1307.5 392.4L1308.2 392.1L1308.9 391.1L1309.6 391.2L1310.3 391.2L1311.0 389.5L1311.7 389.2L1312.4 388.8L1313.1 387.0L1313.8 386.6L1314.5 384.9L1315.2 384.3L1315.9 382.8L1316.6 381.8L1317.3 380.6L1318.0 379.4L1318.7 377.9L1319.4 375.5L1320.1 375.6L1320.8 373.2L1321.5 371.1L1322.2 369.5L1322.9 368.1L1323.6 365.6L1324.3 363.8L1325.0 361.7L1325.7 360.0L1326.4 357.2L1327.1 355.4L1327.8 353.0L1328.5 350.4L1329.2 348.5L1329.9 345.4L1330.6 342.3L1331.3 340.2L1332.0 337.3L1332.7 334.4L1333.4 331.6L1334.1 329.5L1334.8 325.6L1335.5 322.6L1336.2 319.2L1336.9 316.6L1337.6 312.8L1338.3 309.2L1339.0 305.7L1339.7 303.1L1340.4 299.9L1341.1 295.5L1341.8 292.5L1342.5 289.8L1343.2 286.6L1343.9 282.3L1344.6 279.4L1345.3 276.7L1346.0 272.9L1346.7 269.9L1347.4 266.8L1348.1 263.5L1348.8 261.2L1349.5 258.5L1350.2 255.1L1350.9 253.1L1351.6 251.0L1352.3 248.2L1353.0 246.1L1353.7 243.2L1354.4 241.8L1355.1 238.7L1355.8 237.7L1356.5 234.7L1357.2 232.5L1357.9 230.4L1358.6 228.6L1359.3 226.6L1360.0 224.6L1360.7 222.8L1361.4 221.3L1362.1 219.5L1362.8 217.2L1363.5 216.0L1364.2 213.3L1364.9 211.5L1365.6 209.7L1366.3 208.8L1367.0 206.2L1367.7 204.7L1368.4 204.3L1369.1 203.0L1369.8 201.4L1370.5 198.8L1371.2 198.0L1371.9 197.0L1372.6 195.3L1373.3 193.3L1374.0 192.5L1374.7 190.6L1375.4 189.4L1376.1 189.5L1376.8 187.5L1377.5 185.2L1378.2 183.8L1378.9 183.2L1379.6 181.3L1380.3 180.4L1381.0 178.5L1381.7 177.2L1382.4 176.0L1383.1 174.0L1383.8 172.3L1384.5 171.2L1385.2 170.1L1385.9 169.0L1386.6 167.8L1387.3 166.6L1388.0 165.6L1388.7 163.8L1389.4 163.7L1390.1 162.8L1390.8 161.0L1391.5 159.9L1392.2 159.3L1392.9 158.0L1393.6 156.8L1394.3 155.7L1395.0 154.5L1395.7 153.3L1396.4 153.1L1397.1 152.4L1397.8 150.5L1398.5 150.0L1399.2 149.2L1399.9 148.0L1400.6 147.0L1401.3 146.2L1402.0 144.7L1402.7 144.7L1403.4 143.7L1404.1 143.9L1404.8 142.6L1405.5 141.3L1406.2 140.7L1406.9 140.7L1407.6 139.9L1408.3 138.6L1409.0 137.8L1409.7 136.6L1410.4 136.4L1411.1 135.9L1411.8 135.1L1412.5 135.6L1413.2 133.6L1413.9 133.9L1414.6 133.8L1415.3 133.5L1416.0 133.8L1416.7 132.3L1417.4 132.4L1418.1 132.7L1418.8 132.8L1419.5 132.6L1420.2 132.6L1420.9 133.5L1421.6 132.8L1422.3 133.3L1423.0 134.4L1423.7 134.9L1424.4 134.8L1425.1 134.4L1425.8 134.8L1426.5 135.2L1427.2 135.5L1427.9 136.2L1428.6 137.3L1429.3 137.4L1430.0 137.4L1430.7 137.9L1431.4 138.3L1432.1 139.9L1432.8 139.1L1433.5 140.7L1434.2 140.6L1434.9 141.5L1435.6 142.0L1436.3 143.8L1437.0 144.1L1437.7 146.1L1438.4 145.3L1439.1 146.1L1439.8 147.6L1440.5 148.4L1441.2 148.9L1441.9 149.0L1442.6 151.2L1443.3 151.7L1444.0 152.4L1444.7 152.8L1445.4 154.2L1446.1 154.6L1446.8 155.7L1447.5 156.5L1448.2 158.1L1448.9 158.3L1449.6 159.4L1450.3 161.0L1451.0 161.7L1451.7 162.7L1452.4 163.8L1453.1 165.4L1453.8 166.0L1454.5 167.6L1455.2 169.5L1455.9 170.1L1456.6 170.9L1457.3 172.1L1458.0 173.9L1458.7 174.7L1459.4 175.9L1460.1 177.7L1460.8 179.0L1461.5 181.3L1462.2 181.8L1462.9 184.6L1463.6 185.2L1464.3 187.2L1465.0 189.2L1465.7 190.7L1466.4 192.7L1467.1 193.8L1467.8 195.1L1468.5 197.9L1469.2 199.2L1469.9 201.7L1470.6 204.3L1471.3 205.8L1472.0 207.6L1472.7 209.4L1473.4 211.8L1474.1 213.8L1474.8 215.2L1475.5 218.0L1476.2 219.5L1476.9 222.0L1477.6 223.7L1478.3 226.3L1479.0 228.3L1479.7 230.0L1480.4 232.0L1481.1 234.3L1481.8 236.8L1482.5 238.9L1483.2 240.7L1483.9 243.0L1484.6 245.7L1485.3 246.7L1486.0 249.9L1486.7 251.7L1487.4 255.0L1488.1 256.6L1488.8 259.3L1489.5 261.3L1490.2 264.3L1490.9 267.2L1491.6 270.1L1492.3 271.5L1493.0 274.4L1493.7 278.9L1494.4 280.3L1495.1 282.6L1495.8 285.5L1496.5 286.9L1497.2 291.5L1497.9 293.6L1498.6 295.6L1499.3 299.4L1500.0 301.4L1500.7 303.9L1501.4 307.2L1502.1 309.7L1502.8 312.0L1503.5 314.6L1504.2 316.6L1504.9 318.9L1505.6 322.2L1506.3 324.7L1507.0 326.5L1507.7 328.7L1508.4 330.5L1509.1 332.6L1509.8 334.3L1510.5 337.4L1511.2 338.3L1511.9 340.6L1512.6 342.3L1513.3 343.5L1514.0 346.8L1514.7 347.6L1515.4 349.2L1516.1 351.4L1516.8 352.7L1517.5 354.8L1518.2 356.1L1518.9 358.5L1519.6 360.0L1520.3 361.0L1521.0 363.7L1521.7 364.9L1522.4 365.9L1523.1 368.0L1523.8 369.5L1524.5 371.5L1525.2 371.6L1525.9 373.7L1526.6 374.5L1527.3 376.0L1528.0 376.7L1528.7 377.9L1529.4 379.2L1530.1 379.4L1530.8 380.0L1531.5 381.8L1532.2 382.5L1532.9 383.6L1533.6 384.7L1534.3 385.1L1535.0 386.5L1535.7 386.7L1536.4 387.4L1537.1 388.4L1537.8 388.9L1538.5 389.1L1539.2 389.7L1539.9 389.8L1540.6 390.2L1541.3 390.8L1542.0 391.3L1542.7 390.9L1543.4 391.6L1544.1 392.0L1544.8 392.0L1545.5 391.0L1546.2 391.3L1546.9 390.8L1547.6 390.6L1548.3 390.3L1549.0 389.8L1549.7 389.4L1550.4 388.6L1551.1 387.9L1551.8 387.5L1552.5 386.9L1553.2 386.4L1553.9 385.2L1554.6 384.5L1555.3 383.8L1556.0 381.7L1556.7 380.8L1557.4 379.9L1558.1 378.4L1558.8 376.5L1559.5 375.8L1560.2 373.8L1560.9 371.7L1561.6 371.2L1562.3 368.1L1563.0 366.7L1563.7 364.5L1564.4 362.9L1565.1 361.1L1565.8 358.4L1566.5 356.6L1567.2 354.4L1567.9 351.9L1568.6 350.5L1569.3 347.8L1570.0 345.2L1570.7 342.5L1571.4 340.1L1572.1 337.7L1572.8 334.8L1573.5 332.7L1574.2 328.2L1574.9 325.4L1575.6 323.2L1576.3 319.5L1577.0 317.1L1577.7 313.6L1578.4 310.9L1579.1 307.6L1579.8 304.7L1580.5 301.3L1581.2 298.3L1581.9 294.8L1582.6 291.8L1583.3 288.5L1584.0 285.0L1584.7 281.7L1585.4 278.8L1586.1 276.7L1586.8 272.7L1587.5 271.0L1588.2 267.9L1588.9 266.0L1589.6 263.2L1590.3 260.3L1591.0 258.2L1591.7 254.9L1592.4 253.6L1593.1 251.4L1593.8 248.3L1594.5 247.2L1595.2 244.7L1595.9 242.8L1596.6 240.1L1597.3 239.0L1598.0 237.0L1598.7 234.9L1599.4 232.7L1600.1 231.6L1600.8 230.1L1601.5 228.0L1602.2 226.6L1602.9 224.3L1603.6 223.0L1604.3 221.5L1605.0 219.8L1605.7 219.4L1606.4 216.8L1607.1 214.9L1607.8 214.0L1608.5 211.7L1609.2 210.9L1609.9 209.7L1610.6 207.7L1611.3 206.4L1612.0 204.8L1612.7 203.9L1613.4 202.3L1614.1 202.0L1614.8 200.3L1615.5 198.6L1616.2 196.9L1616.9 197.1L1617.6 195.5L1618.3 193.9L1619.0 192.5L1619.7 191.2L1620.4 189.7L1621.1 189.4L1621.8 187.4L1622.5 185.4L1623.2 184.4L1623.9 182.2L1624.6 182.3L1625.3 181.0L1626.0 180.2L1626.7 179.1L1627.4 176.6L1628.1 176.0L1628.8 175.0L1629.5 173.9L1630.2 172.3L1630.9 171.8L1631.6 170.7L1632.3 170.1L1633.0 168.6L1633.7 167.7L1634.4 166.7L1635.1 166.0L1635.8 165.0L1636.5 164.4L1637.2 163.9L1637.9 163.1L1638.6 162.6L1639.3 161.7L1640.0 160.6L1640.7 159.0L1641.4 158.8L1642.1 158.2L1642.8 156.3L1643.5 155.5L1644.2 154.7L1644.9 153.9L1645.6 153.4L1646.3 152.4L1647.0 152.2L1647.7 150.9L1648.4 150.7L1649.1 150.0L1649.8 149.3L1650.5 149.6L1651.2 148.8L1651.9 148.6L1652.6 147.9L1653.3 148.1L1654.0 147.8L1654.7 147.2L1655.4 146.4L1656.1 147.3L1656.8 147.2L1657.5 146.9L1658.2 146.9L1658.9 146.9L1659.6 147.0L1660.3 146.5L1661.0 147.1L1661.7 147.4L1662.4 147.3L1663.1 147.4L1663.8 148.9L1664.5 148.7L1665.2 148.7L1665.9 149.0L1666.6 148.6L1667.3 149.6L1668.0 150.6L1668.7 151.7L1669.4 150.9L1670.1 152.0L1670.8 153.7L1671.5 153.7L1672.2 154.2L1672.9 155.1L1673.6 155.2L1674.3 155.7L1675.0 156.7L1675.7 157.4L1676.4 157.2L1677.1 159.0L1677.8 158.3L1678.5 159.4L1679.2 161.7L1679.9 160.9L1680.6 162.2L1681.3 162.3L1682.0 163.4L1682.7 164.0L1683.4 165.0L1684.1 166.4L1684.8 167.7L1685.5 168.3L1686.2 169.5L1686.9 169.6L1687.6 171.3L1688.3 171.9L1689.0 173.2L1689.7 173.4L1690.4 174.5L1691.1 176.1L1691.8 176.8L1692.5 177.6L1693.2 178.4L1693.9 179.7L1694.6 181.0L1695.3 182.3L1696.0 182.9L1696.7 184.3L1697.4 185.9L1698.1 186.5L1698.8 188.8L1699.5 189.8L1700.2 191.2L1700.9 191.7L1701.6 193.6L1702.3 195.4L1703.0 197.2L1703.7 198.6L1704.4 200.9L1705.1 202.5L1705.8 204.0L1706.5 205.0L1707.2 208.2L1707.9 209.2L1708.6 211.3L1709.3 212.5L1710.0 214.6L1710.7 216.7L1711.4 218.3L1712.1 220.4L1712.8 221.8L1713.5 224.6L1714.2 224.8L1714.9 227.3L1715.6 229.9L1716.3 231.3L1717.0 233.2L1717.7 234.6L1718.4 237.9L1719.1 238.6L1719.8 241.6L1720.5 243.5L1721.2 245.8L1721.9 248.1L1722.6 249.2L1723.3 251.2L1724.0 253.5L1724.7 255.0L1725.4 258.2L1726.1 259.9L1726.8 262.3L1727.5 264.0L1728.2 266.8L1728.9 268.8L1729.6 271.4L1730.3 273.4L1731.0 276.8L1731.7 278.6L1732.4 280.4L1733.1 284.3L1733.8 286.5L1734.5 288.9L1735.2 292.9L1735.9 294.4L1736.6 296.5L1737.3 299.3L1738.0 302.3L1738.7 304.5L1739.4 307.5L1740.1 309.8L1740.8 311.3L1741.5 313.9L1742.2 316.3L1742.9 318.0L1743.6 320.1L1744.3 322.7L1745.0 324.5L1745.7 325.7L1746.4 328.0L1747.1 330.0L1747.8 332.0L1748.5 333.6L1749.2 336.3L1749.9 337.2L1750.6 338.9L1751.3 341.3L1752.0 342.0L1752.7 344.2L1753.4 346.6L1754.1 347.4L1754.8 349.2L1755.5 351.6L1756.2 352.9L1756.9 354.2L1757.6 355.8L1758.3 356.8L1759.0 358.6L1759.7 359.8L1760.4 362.3L1761.1 362.8L1761.8 363.7L1762.5 365.1L1763.2 366.4L1763.9 367.0L1764.6 368.4L1765.3 370.6L1766.0 370.4L1766.7 371.8L1767.4 373.5L1768.1 374.7L1768.8 374.6L1769.5 376.5L1770.2 376.5L1770.9 378.1L1771.6 378.3L1772.3 378.7L1773.0 379.7L1773.7 380.2L1774.4 380.1L1775.1 381.8L1775.8 375.2L1776.5 376.2L1777.2 375.9L1777.9 375.7L1778.6 382.2L1779.3 382.9L1780.0 383.4L1780.7 384.0L1781.4 383.3L1782.1 383.2L1782.8 382.8L1783.5 383.2L1784.2 383.2L1784.9 381.9L1785.6 383.1L1786.3 382.7L1787.0 382.8L1787.7 380.9L1788.4 380.7L1789.1 380.1L1789.8 378.8L1790.5 378.2L1791.2 377.3L1791.9 376.9L1792.6 375.9L1793.3 375.2L1794.0 373.3L1794.7 371.7L1795.4 371.2L1796.1 369.9L1796.8 368.6L1797.5 367.4L1798.2 365.1L1798.9 364.2L1799.6 361.8L1800.3 360.6L1801.0 359.1L1801.7 356.9L1802.4 355.2L1803.1 352.5L1803.8 350.8L1804.5 349.1L1805.2 346.4L1805.9 344.3L1806.6 343.4L1807.3 340.1L1808.0 337.3L1808.7 334.7L1809.4 333.2L1810.1 328.8L1810.8 327.2L1811.5 324.9L1812.2 321.6L1812.9 319.2L1813.6 315.7L1814.3 313.2L1815.0 310.3L1815.7 307.3L1816.4 304.3L1817.1 301.2L1817.8 298.6L1818.5 294.9L1819.2 291.7L1819.9 288.8L1820.6 285.7L1821.3 282.2L1822.0 279.0L1822.7 276.3L1823.4 274.1L1824.1 270.8L1824.8 268.1L1825.5 266.8L1826.2 263.4L1826.9 260.2L1827.6 257.6L1828.3 256.0L1829.0 252.7L1829.7 251.3L1830.4 248.8L1831.1 247.1L1831.8 244.1L1832.5 242.8L1833.2 239.7L1833.9 238.4L1834.6 237.1L1835.3 235.1L1836.0 232.1L1836.7 231.4L1837.4 229.5L1838.1 227.5L1838.8 225.4L1839.5 223.9L1840.2 222.0L1840.9 221.0L1841.6 219.1L1842.3 217.7L1843.0 215.9L1843.7 213.6L1844.4 212.6L1845.1 212.0L1845.8 209.2L1846.5 208.4L1847.2 206.6L1847.9 205.3L1848.6 204.5L1849.3 203.5L1850.0 202.2L1850.7 200.9L1851.4 199.9L1852.1 197.6L1852.8 197.4L1853.5 196.0L1854.2 194.5L1854.9 193.3L1855.6 191.7L1856.3 191.2L1857.0 189.1L1857.7 187.5L1858.4 186.8L1859.1 185.2L1859.8 184.1L1860.5 183.5L1861.2 181.5L1861.9 180.3L1862.6 180.0L1863.3 177.2L1864.0 176.8L1864.7 175.9L1865.4 175.0L1866.1 174.2L1866.8 171.9L1867.5 171.4L1868.2 170.1L1868.9 168.9L1869.6 167.8L1870.3 166.6L1871.0 166.4L1871.7 165.7L1872.4 164.0L1873.1 163.9L1873.8 162.4L1874.5 161.4L1875.2 159.8L1875.9 160.5L1876.6 159.5L1877.3 158.3L1878.0 157.4L1878.7 156.2L1879.4 156.2L1880.1 155.1L1880.8 154.6L1881.5 153.7L1882.2 152.3L1882.9 151.4L1883.6 151.5L1884.3 149.9L1885.0 150.0L1885.7 149.6L1886.4 148.0L1887.1 148.2L1887.8 147.3L1888.5 146.9L1889.2 145.9L1889.9 145.6L1890.6 145.3L1891.3 145.4L1892.0 144.6L1892.7 144.1L1893.4 143.1L1894.1 143.5L1894.8 142.9L1895.5 143.1L1896.2 143.2L1896.9 143.5L1897.6 143.4L1898.3 143.3L1899.0 143.4L1899.7 144.2L1900.4 143.4L1901.1 144.1L1901.8 145.0L1902.5 144.6L1903.2 145.4L1903.9 145.7L1904.6 146.5L1905.3 146.6L1906.0 145.8L1906.7 146.9L1907.4 147.5L1908.1 148.2L1908.8 148.5L1909.5 149.6L1910.2 149.9L1910.9 149.5L1911.6 150.4L1912.3 150.4L1913.0 152.7L1913.7 152.7L1914.4 153.4L1915.1 153.6L1915.8 154.9L1916.5 156.0L1917.2 156.5L1917.9 157.3L1918.6 158.0L1919.3 160.0L1920.0 159.7L1920.7 160.2L1921.4 161.4L1922.1 162.3L1922.8 163.2L1923.5 164.0L1924.2 164.5L1924.9 165.8L1925.6 167.0L1926.3 167.2L1927.0 169.6L1927.7 170.5L1928.4 170.1L1929.1 171.8L1929.8 173.5L1930.5 174.8L1931.2 176.2L1931.9 175.9L1932.6 177.4L1933.3 179.0L1934.0 180.7L1934.7 181.3L1935.4 183.3L1936.1 184.7L1936.8 186.2L1937.5 186.8L1938.2 188.9L1938.9 190.3L1939.6 191.7L1940.3 194.0L1941.0 194.9L1941.7 197.3L1942.4 198.2L1943.1 200.9L1943.8 202.7L1944.5 203.5L1945.2 205.9L1945.9 207.8L1946.6 209.2L1947.3 211.9L1948.0 213.8L1948.7 215.2L1949.4 217.6L1950.1 220.0L1950.8 221.6L1951.5 223.4L1952.2 226.4L1952.9 227.3L1953.6 229.9L1954.3 232.2L1955.0 234.1L1955.7 235.0L1956.4 237.7L1957.1 239.9L1957.8 241.9L1958.5 244.4L1959.2 246.5L1959.9 248.5L1960.6 250.8L1961.3 253.3L1962.0 255.7L1962.7 256.7L1963.4 260.8L1964.1 262.1L1964.8 265.1L1965.5 266.6L1966.2 269.6L1966.9 271.8L1967.6 275.4L1968.3 277.9L1969.0 280.2L1969.7 282.8L1970.4 285.7L1971.1 287.9L1971.8 290.7" clip-path="url(#pc)" fill="none" stroke="#0f5dce" stroke-width="4.25" stroke-linejoin="round" stroke-linecap="butt"/><rect x="741.5" y="187.7" width="6.4" height="6.4" fill="#ff0010"/></svg>
<span style="position:absolute;left:98.9px;top:410.00px;font-size:14.4px;line-height:20px;color:#5e5e5e;white-space:pre;letter-spacing:0.002px;">0</span>
<span style="position:absolute;left:98.4px;top:363.00px;font-size:14.4px;line-height:20px;color:#5e5e5e;white-space:pre;letter-spacing:0.679px;">1</span>
<span style="position:absolute;left:98.8px;top:316.00px;font-size:14.4px;line-height:20px;color:#5e5e5e;white-space:pre;letter-spacing:0.334px;">2</span>
<span style="position:absolute;left:99.0px;top:269.00px;font-size:14.4px;line-height:20px;color:#5e5e5e;white-space:pre;letter-spacing:0.060px;">3</span>
<span style="position:absolute;left:99.2px;top:223.00px;font-size:14.4px;line-height:20px;color:#5e5e5e;white-space:pre;letter-spacing:-0.372px;">4</span>
<span style="position:absolute;left:98.9px;top:176.00px;font-size:14.4px;line-height:20px;color:#5e5e5e;white-space:pre;letter-spacing:0.060px;">5</span>
<span style="position:absolute;left:98.8px;top:129.00px;font-size:14.4px;line-height:20px;color:#5e5e5e;white-space:pre;letter-spacing:0.233px;">6</span>
<span style="position:absolute;left:91.0px;top:428.00px;font-size:14.4px;line-height:20px;color:#5e5e5e;white-space:pre;letter-spacing:-0.262px;">00:02:00</span>
<span style="position:absolute;left:198.4px;top:428.00px;font-size:14.4px;line-height:20px;color:#5e5e5e;white-space:pre;letter-spacing:-0.262px;">05:35:20</span>
<span style="position:absolute;left:305.3px;top:428.00px;font-size:14.4px;line-height:20px;color:#5e5e5e;white-space:pre;letter-spacing:-0.034px;">11:08:40</span>
<span style="position:absolute;left:412.7px;top:428.00px;font-size:14.4px;line-height:20px;color:#5e5e5e;white-space:pre;letter-spacing:-0.186px;">16:42:00</span>
<span style="position:absolute;left:520.4px;top:428.00px;font-size:14.4px;line-height:20px;color:#5e5e5e;white-space:pre;letter-spacing:-0.240px;">22:15:20</span>
<span style="position:absolute;left:628.0px;top:428.00px;font-size:14.4px;line-height:20px;color:#5e5e5e;white-space:pre;letter-spacing:-0.262px;">03:48:40</span>
<span style="position:absolute;left:735.4px;top:428.00px;font-size:14.4px;line-height:20px;color:#5e5e5e;white-space:pre;letter-spacing:-0.262px;">09:22:00</span>
<span style="position:absolute;left:842.3px;top:428.00px;font-size:14.4px;line-height:20px;color:#5e5e5e;white-space:pre;letter-spacing:-0.186px;">14:55:20</span>
<span style="position:absolute;left:950.1px;top:428.00px;font-size:14.4px;line-height:20px;color:#5e5e5e;white-space:pre;letter-spacing:-0.240px;">20:28:40</span>
<span style="position:absolute;left:1057.6px;top:428.00px;font-size:14.4px;line-height:20px;color:#5e5e5e;white-space:pre;letter-spacing:-0.262px;">02:02:00</span>
<span style="position:absolute;left:1165.0px;top:428.00px;font-size:14.4px;line-height:20px;color:#5e5e5e;white-space:pre;letter-spacing:-0.262px;">07:35:20</span>
<span style="position:absolute;left:1271.9px;top:428.00px;font-size:14.4px;line-height:20px;color:#5e5e5e;white-space:pre;letter-spacing:-0.186px;">13:08:40</span>
<span style="position:absolute;left:1379.3px;top:428.00px;font-size:14.4px;line-height:20px;color:#5e5e5e;white-space:pre;letter-spacing:-0.186px;">18:42:00</span>
<span style="position:absolute;left:1487.3px;top:428.00px;font-size:14.4px;line-height:20px;color:#5e5e5e;white-space:pre;letter-spacing:-0.262px;">00:15:20</span>
<span style="position:absolute;left:1594.7px;top:428.00px;font-size:14.4px;line-height:20px;color:#5e5e5e;white-space:pre;letter-spacing:-0.262px;">05:48:40</span>
<span style="position:absolute;left:1701.5px;top:428.00px;font-size:14.4px;line-height:20px;color:#5e5e5e;white-space:pre;letter-spacing:-0.034px;">11:22:00</span>
<span style="position:absolute;left:1808.9px;top:428.00px;font-size:14.4px;line-height:20px;color:#5e5e5e;white-space:pre;letter-spacing:-0.186px;">16:55:20</span>
<span style="position:absolute;left:1916.7px;top:428.00px;font-size:14.4px;line-height:20px;color:#5e5e5e;white-space:pre;letter-spacing:-0.240px;">22:28:40</span>
<span style="position:absolute;left:904.4px;top:455.00px;font-size:14.4px;line-height:20px;color:#5e5e5e;white-space:pre;letter-spacing:-0.167px;">Series Time(UTC) - 2014-09-09 - 2014-09-13</span>
<svg style="position:absolute;left:0;top:200px" width="60" height="130" viewBox="0 200 60 130"><text transform="translate(31.9,287.1) rotate(-90)" font-family="Liberation Sans, sans-serif" font-size="13.4" letter-spacing="-0.2" fill="#5e5e5e">Tide (m)</text></svg>
<span style="position:absolute;left:11.8px;top:482.00px;font-size:15.8px;line-height:20px;color:#1b7ba6;white-space:pre;letter-spacing:-0.046px;">2014-09-10 08:27:53.820, Tide 4.819 m</span>
<div style="position:absolute;left:6px;top:506px;width:2003px;height:8px;background:linear-gradient(#b4b4b4,#c8c8c8 25%,#d9d9d9 50%,#e5e5e5 78%,#ececec);"></div>
<svg style="position:absolute;left:1003px;top:508px" width="18" height="3" viewBox="0 0 18 3"><rect x="0" y="1" width="1" height="1" fill="#9e9e9e"/><rect x="0.5" y="2" width="1" height="1" fill="#ececec"/><rect x="3" y="1" width="1" height="1" fill="#9e9e9e"/><rect x="3.5" y="2" width="1" height="1" fill="#ececec"/><rect x="6" y="1" width="1" height="1" fill="#9e9e9e"/><rect x="6.5" y="2" width="1" height="1" fill="#ececec"/><rect x="9" y="1" width="1" height="1" fill="#9e9e9e"/><rect x="9.5" y="2" width="1" height="1" fill="#ececec"/><rect x="12" y="1" width="1" height="1" fill="#9e9e9e"/><rect x="12.5" y="2" width="1" height="1" fill="#ececec"/><rect x="15" y="1" width="1" height="1" fill="#9e9e9e"/><rect x="15.5" y="2" width="1" height="1" fill="#ececec"/></svg>
<div style="position:absolute;left:8px;top:514px;width:2002px;height:23px;background:#c7c7c7;"></div>
<div style="position:absolute;left:8px;top:537px;width:1px;height:459px;background:#cacaca;"></div>
<span style="position:absolute;left:958.9px;top:518.00px;font-size:15.8px;line-height:20px;color:#1a1a1a;white-space:pre;letter-spacing:-0.294px;">File Table</span>
<svg style="position:absolute;left:1977px;top:520px;overflow:visible" width="10" height="10" viewBox="0 0 10 10"><rect x="0.6" y="3.8" width="5.7" height="5.5" fill="#c7c7c7" stroke="#2a2a2a" stroke-width="1.15"/><rect x="4" y="1.8" width="4.4" height="2.5" fill="#dadada" stroke="#2a2a2a" stroke-width="1.15"/></svg>
<svg style="position:absolute;left:1995px;top:520px;overflow:visible" width="10" height="10" viewBox="0 0 10 10"><path d="M0.4 1.4L8.8 9.8M8.8 1.4L0.4 9.8" stroke="#222" stroke-width="1.15" fill="none"/></svg>
<span style="position:absolute;left:13.8px;top:549.00px;font-size:15.8px;line-height:20px;color:#111;white-space:pre;letter-spacing:-0.405px;">Source Type:</span>
<div class="combo" style="left:110px;top:542px;width:195px;height:29px;"></div>
<span style="position:absolute;left:114.5px;top:549.00px;font-size:15.8px;line-height:20px;color:#111;white-space:pre;letter-spacing:-0.264px;">Raw Sonar</span>
<svg style="position:absolute;left:290.2px;top:555.0999999999999px;overflow:visible" width="8" height="4.4" viewBox="0 0 8 4.4"><path d="M0 0H8L4.0 4.4Z" fill="#4a4a4a"/></svg>
<span style="position:absolute;left:342.6px;top:549.00px;font-size:15.8px;line-height:20px;color:#111;white-space:pre;letter-spacing:0.056px;">Filter:</span>
<div style="position:absolute;left:390px;top:542px;width:675px;height:29px;background:#fff;border:1px solid #b2b2b2;border-radius:3px;"></div>
<div class="combo" style="left:1069px;top:542px;width:120px;height:29px;"></div>
<span style="position:absolute;left:1074.1px;top:549.00px;font-size:15.8px;line-height:20px;color:#111;white-space:pre;letter-spacing:-0.009px;">All Columns</span>
<svg style="position:absolute;left:1174.0px;top:555.0999999999999px;overflow:visible" width="8" height="4.4" viewBox="0 0 8 4.4"><path d="M0 0H8L4.0 4.4Z" fill="#4a4a4a"/></svg>
<div style="position:absolute;left:0;top:0;width:2010px;height:989px;overflow:hidden;">
<div style="position:absolute;left:14px;top:580px;width:1991px;height:410px;background:#fff;border:1px solid #bcbcbc;"></div>
<div class="row" style="top:607.6px;background:#ffffff;"></div>
<div class="row" style="top:652.6px;background:#e9e7e4;"></div>
<div class="row" style="top:697.6px;background:#ffffff;"></div>
<div class="row" style="top:742.6px;background:#e9e7e4;"></div>
<div class="row" style="top:787.6px;background:#ffffff;"></div>
<div class="row" style="top:832.6px;background:#e9e7e4;"></div>
<div class="row" style="top:877.6px;background:#ffffff;"></div>
<div class="row" style="top:922.6px;background:#e9e7e4;"></div>
<div class="row" style="top:967.6px;background:#ffffff;"></div>
<div class="vl" style="left:350px;"></div>
<div class="vl" style="left:397px;"></div>
<div class="vl" style="left:607px;"></div>
<div class="vl" style="left:815px;"></div>
<div class="vl" style="left:1028px;"></div>
<div class="vl" style="left:1150px;"></div>
<div class="cb" style="top:620.2px;"><svg style="position:absolute;left:-1px;top:-1px" width="21" height="21" viewBox="0 0 21 21"><path d="M4.6 10.7L9.5 16.9L15.8 4.2" fill="none" stroke="#161616" stroke-width="2.5" stroke-linejoin="round"/></svg></div>
<span style="position:absolute;left:44.7px;top:623.00px;font-size:15.8px;line-height:20px;color:#262626;white-space:pre;letter-spacing:-0.106px;">0020_20140909_162706_True_North.all</span>
<span style="position:absolute;left:353.7px;top:623.00px;font-size:15.8px;line-height:20px;color:#262626;white-space:pre;letter-spacing:-0.205px;">C:\...</span>
<span style="position:absolute;left:400.2px;top:623.00px;font-size:15.8px;line-height:20px;color:#262626;white-space:pre;letter-spacing:-0.109px;">2014-09-09 16:27:06 UTC</span>
<span style="position:absolute;left:610.3px;top:623.00px;font-size:15.8px;line-height:20px;color:#262626;white-space:pre;letter-spacing:-0.118px;">2014-09-09 16:29:34 UTC</span>
<span style="position:absolute;left:820.0px;top:623.00px;font-size:15.8px;line-height:20px;color:#262626;white-space:pre;letter-spacing:-0.278px;">True_North_SN265_SN10265</span>
<span style="position:absolute;left:1031.4px;top:623.00px;font-size:15.8px;line-height:20px;color:#262626;white-space:pre;letter-spacing:-0.219px;">Kongsberg (ALL)</span>
<span style="position:absolute;left:1153.6px;top:623.00px;font-size:15.8px;line-height:20px;color:#262626;white-space:pre;letter-spacing:-0.082px;">0020_20140909_162706_True_North.qpd</span>
<div class="cb" style="top:665.2px;"><svg style="position:absolute;left:-1px;top:-1px" width="21" height="21" viewBox="0 0 21 21"><path d="M4.6 10.7L9.5 16.9L15.8 4.2" fill="none" stroke="#161616" stroke-width="2.5" stroke-linejoin="round"/></svg></div>
<span style="position:absolute;left:44.7px;top:668.00px;font-size:15.8px;line-height:20px;color:#262626;white-space:pre;letter-spacing:-0.106px;">0019_20140909_162527_True_North.all</span>
<span style="position:absolute;left:353.7px;top:668.00px;font-size:15.8px;line-height:20px;color:#262626;white-space:pre;letter-spacing:-0.205px;">C:\...</span>
<span style="position:absolute;left:400.2px;top:668.00px;font-size:15.8px;line-height:20px;color:#262626;white-space:pre;letter-spacing:-0.109px;">2014-09-09 16:25:27 UTC</span>
<span style="position:absolute;left:610.3px;top:668.00px;font-size:15.8px;line-height:20px;color:#262626;white-space:pre;letter-spacing:-0.118px;">2014-09-09 16:26:36 UTC</span>
<span style="position:absolute;left:820.0px;top:668.00px;font-size:15.8px;line-height:20px;color:#262626;white-space:pre;letter-spacing:-0.278px;">True_North_SN265_SN10265</span>
<span style="position:absolute;left:1031.4px;top:668.00px;font-size:15.8px;line-height:20px;color:#262626;white-space:pre;letter-spacing:-0.219px;">Kongsberg (ALL)</span>
<span style="position:absolute;left:1153.6px;top:668.00px;font-size:15.8px;line-height:20px;color:#262626;white-space:pre;letter-spacing:-0.082px;">0019_20140909_162527_True_North.qpd</span>
<div class="cb" style="top:710.2px;"><svg style="position:absolute;left:-1px;top:-1px" width="21" height="21" viewBox="0 0 21 21"><path d="M4.6 10.7L9.5 16.9L15.8 4.2" fill="none" stroke="#161616" stroke-width="2.5" stroke-linejoin="round"/></svg></div>
<span style="position:absolute;left:44.7px;top:713.00px;font-size:15.8px;line-height:20px;color:#262626;white-space:pre;letter-spacing:-0.106px;">0018_20140909_162308_True_North.all</span>
<span style="position:absolute;left:353.7px;top:713.00px;font-size:15.8px;line-height:20px;color:#262626;white-space:pre;letter-spacing:-0.205px;">C:\...</span>
<span style="position:absolute;left:400.2px;top:713.00px;font-size:15.8px;line-height:20px;color:#262626;white-space:pre;letter-spacing:-0.109px;">2014-09-09 16:23:08 UTC</span>
<span style="position:absolute;left:610.3px;top:713.00px;font-size:15.8px;line-height:20px;color:#262626;white-space:pre;letter-spacing:-0.118px;">2014-09-09 16:24:48 UTC</span>
<span style="position:absolute;left:820.0px;top:713.00px;font-size:15.8px;line-height:20px;color:#262626;white-space:pre;letter-spacing:-0.278px;">True_North_SN265_SN10265</span>
<span style="position:absolute;left:1031.4px;top:713.00px;font-size:15.8px;line-height:20px;color:#262626;white-space:pre;letter-spacing:-0.219px;">Kongsberg (ALL)</span>
<span style="position:absolute;left:1153.6px;top:713.00px;font-size:15.8px;line-height:20px;color:#262626;white-space:pre;letter-spacing:-0.082px;">0018_20140909_162308_True_North.qpd</span>
<div class="cb" style="top:755.2px;"><svg style="position:absolute;left:-1px;top:-1px" width="21" height="21" viewBox="0 0 21 21"><path d="M4.6 10.7L9.5 16.9L15.8 4.2" fill="none" stroke="#161616" stroke-width="2.5" stroke-linejoin="round"/></svg></div>
<span style="position:absolute;left:44.7px;top:758.00px;font-size:15.8px;line-height:20px;color:#262626;white-space:pre;letter-spacing:-0.106px;">0017_20140909_162017_True_North.all</span>
<span style="position:absolute;left:353.7px;top:758.00px;font-size:15.8px;line-height:20px;color:#262626;white-space:pre;letter-spacing:-0.205px;">C:\...</span>
<span style="position:absolute;left:400.2px;top:758.00px;font-size:15.8px;line-height:20px;color:#262626;white-space:pre;letter-spacing:-0.109px;">2014-09-09 16:20:17 UTC</span>
<span style="position:absolute;left:610.3px;top:758.00px;font-size:15.8px;line-height:20px;color:#262626;white-space:pre;letter-spacing:-0.118px;">2014-09-09 16:22:04 UTC</span>
<span style="position:absolute;left:820.0px;top:758.00px;font-size:15.8px;line-height:20px;color:#262626;white-space:pre;letter-spacing:-0.278px;">True_North_SN265_SN10265</span>
<span style="position:absolute;left:1031.4px;top:758.00px;font-size:15.8px;line-height:20px;color:#262626;white-space:pre;letter-spacing:-0.219px;">Kongsberg (ALL)</span>
<span style="position:absolute;left:1153.6px;top:758.00px;font-size:15.8px;line-height:20px;color:#262626;white-space:pre;letter-spacing:-0.082px;">0017_20140909_162017_True_North.qpd</span>
<div class="cb" style="top:800.2px;"><svg style="position:absolute;left:-1px;top:-1px" width="21" height="21" viewBox="0 0 21 21"><path d="M4.6 10.7L9.5 16.9L15.8 4.2" fill="none" stroke="#161616" stroke-width="2.5" stroke-linejoin="round"/></svg></div>
<span style="position:absolute;left:44.7px;top:803.00px;font-size:15.8px;line-height:20px;color:#262626;white-space:pre;letter-spacing:-0.106px;">0016_20140909_161619_True_North.all</span>
<span style="position:absolute;left:353.7px;top:803.00px;font-size:15.8px;line-height:20px;color:#262626;white-space:pre;letter-spacing:-0.205px;">C:\...</span>
<span style="position:absolute;left:400.2px;top:803.00px;font-size:15.8px;line-height:20px;color:#262626;white-space:pre;letter-spacing:-0.109px;">2014-09-09 16:16:19 UTC</span>
<span style="position:absolute;left:610.3px;top:803.00px;font-size:15.8px;line-height:20px;color:#262626;white-space:pre;letter-spacing:-0.118px;">2014-09-09 16:18:43 UTC</span>
<span style="position:absolute;left:820.0px;top:803.00px;font-size:15.8px;line-height:20px;color:#262626;white-space:pre;letter-spacing:-0.278px;">True_North_SN265_SN10265</span>
<span style="position:absolute;left:1031.4px;top:803.00px;font-size:15.8px;line-height:20px;color:#262626;white-space:pre;letter-spacing:-0.219px;">Kongsberg (ALL)</span>
<span style="position:absolute;left:1153.6px;top:803.00px;font-size:15.8px;line-height:20px;color:#262626;white-space:pre;letter-spacing:-0.082px;">0016_20140909_161619_True_North.qpd</span>
<div class="cb" style="top:845.2px;"><svg style="position:absolute;left:-1px;top:-1px" width="21" height="21" viewBox="0 0 21 21"><path d="M4.6 10.7L9.5 16.9L15.8 4.2" fill="none" stroke="#161616" stroke-width="2.5" stroke-linejoin="round"/></svg></div>
<span style="position:absolute;left:44.7px;top:848.00px;font-size:15.8px;line-height:20px;color:#262626;white-space:pre;letter-spacing:-0.106px;">0015_20140909_161015_True_North.all</span>
<span style="position:absolute;left:353.7px;top:848.00px;font-size:15.8px;line-height:20px;color:#262626;white-space:pre;letter-spacing:-0.205px;">C:\...</span>
<span style="position:absolute;left:400.2px;top:848.00px;font-size:15.8px;line-height:20px;color:#262626;white-space:pre;letter-spacing:-0.109px;">2014-09-09 16:10:15 UTC</span>
<span style="position:absolute;left:610.3px;top:848.00px;font-size:15.8px;line-height:20px;color:#262626;white-space:pre;letter-spacing:-0.118px;">2014-09-09 16:14:50 UTC</span>
<span style="position:absolute;left:820.0px;top:848.00px;font-size:15.8px;line-height:20px;color:#262626;white-space:pre;letter-spacing:-0.278px;">True_North_SN265_SN10265</span>
<span style="position:absolute;left:1031.4px;top:848.00px;font-size:15.8px;line-height:20px;color:#262626;white-space:pre;letter-spacing:-0.219px;">Kongsberg (ALL)</span>
<span style="position:absolute;left:1153.6px;top:848.00px;font-size:15.8px;line-height:20px;color:#262626;white-space:pre;letter-spacing:-0.082px;">0015_20140909_161015_True_North.qpd</span>
<div class="cb" style="top:890.2px;"><svg style="position:absolute;left:-1px;top:-1px" width="21" height="21" viewBox="0 0 21 21"><path d="M4.6 10.7L9.5 16.9L15.8 4.2" fill="none" stroke="#161616" stroke-width="2.5" stroke-linejoin="round"/></svg></div>
<span style="position:absolute;left:44.7px;top:893.00px;font-size:15.8px;line-height:20px;color:#262626;white-space:pre;letter-spacing:-0.106px;">0014_20140909_160352_True_North.all</span>
<span style="position:absolute;left:353.7px;top:893.00px;font-size:15.8px;line-height:20px;color:#262626;white-space:pre;letter-spacing:-0.205px;">C:\...</span>
<span style="position:absolute;left:400.2px;top:893.00px;font-size:15.8px;line-height:20px;color:#262626;white-space:pre;letter-spacing:-0.109px;">2014-09-09 16:03:52 UTC</span>
<span style="position:absolute;left:610.3px;top:893.00px;font-size:15.8px;line-height:20px;color:#262626;white-space:pre;letter-spacing:-0.118px;">2014-09-09 16:08:39 UTC</span>
<span style="position:absolute;left:820.0px;top:893.00px;font-size:15.8px;line-height:20px;color:#262626;white-space:pre;letter-spacing:-0.278px;">True_North_SN265_SN10265</span>
<span style="position:absolute;left:1031.4px;top:893.00px;font-size:15.8px;line-height:20px;color:#262626;white-space:pre;letter-spacing:-0.219px;">Kongsberg (ALL)</span>
<span style="position:absolute;left:1153.6px;top:893.00px;font-size:15.8px;line-height:20px;color:#262626;white-space:pre;letter-spacing:-0.082px;">0014_20140909_160352_True_North.qpd</span>
<div class="cb" style="top:935.2px;"><svg style="position:absolute;left:-1px;top:-1px" width="21" height="21" viewBox="0 0 21 21"><path d="M4.6 10.7L9.5 16.9L15.8 4.2" fill="none" stroke="#161616" stroke-width="2.5" stroke-linejoin="round"/></svg></div>
<span style="position:absolute;left:44.7px;top:938.00px;font-size:15.8px;line-height:20px;color:#262626;white-space:pre;letter-spacing:-0.106px;">0013_20140909_155813_True_North.all</span>
<span style="position:absolute;left:353.7px;top:938.00px;font-size:15.8px;line-height:20px;color:#262626;white-space:pre;letter-spacing:-0.205px;">C:\...</span>
<span style="position:absolute;left:400.2px;top:938.00px;font-size:15.8px;line-height:20px;color:#262626;white-space:pre;letter-spacing:-0.109px;">2014-09-09 15:58:13 UTC</span>
<span style="position:absolute;left:610.3px;top:938.00px;font-size:15.8px;line-height:20px;color:#262626;white-space:pre;letter-spacing:-0.118px;">2014-09-09 16:03:18 UTC</span>
<span style="position:absolute;left:820.0px;top:938.00px;font-size:15.8px;line-height:20px;color:#262626;white-space:pre;letter-spacing:-0.278px;">True_North_SN265_SN10265</span>
<span style="position:absolute;left:1031.4px;top:938.00px;font-size:15.8px;line-height:20px;color:#262626;white-space:pre;letter-spacing:-0.219px;">Kongsberg (ALL)</span>
<span style="position:absolute;left:1153.6px;top:938.00px;font-size:15.8px;line-height:20px;color:#262626;white-space:pre;letter-spacing:-0.082px;">0013_20140909_155813_True_North.qpd</span>
<div class="cb" style="top:980.2px;"><svg style="position:absolute;left:-1px;top:-1px" width="21" height="21" viewBox="0 0 21 21"><path d="M4.6 10.7L9.5 16.9L15.8 4.2" fill="none" stroke="#161616" stroke-width="2.5" stroke-linejoin="round"/></svg></div>
<span style="position:absolute;left:44.7px;top:983.00px;font-size:15.8px;line-height:20px;color:#262626;white-space:pre;letter-spacing:-0.106px;">0012_20140909_155314_True_North.all</span>
<span style="position:absolute;left:353.7px;top:983.00px;font-size:15.8px;line-height:20px;color:#262626;white-space:pre;letter-spacing:-0.205px;">C:\...</span>
<span style="position:absolute;left:400.2px;top:983.00px;font-size:15.8px;line-height:20px;color:#262626;white-space:pre;letter-spacing:-0.109px;">2014-09-09 15:53:14 UTC</span>
<span style="position:absolute;left:610.3px;top:983.00px;font-size:15.8px;line-height:20px;color:#262626;white-space:pre;letter-spacing:-0.118px;">2014-09-09 15:56:45 UTC</span>
<span style="position:absolute;left:820.0px;top:983.00px;font-size:15.8px;line-height:20px;color:#262626;white-space:pre;letter-spacing:-0.278px;">True_North_SN265_SN10265</span>
<span style="position:absolute;left:1031.4px;top:983.00px;font-size:15.8px;line-height:20px;color:#262626;white-space:pre;letter-spacing:-0.219px;">Kongsberg (ALL)</span>
<span style="position:absolute;left:1153.6px;top:983.00px;font-size:15.8px;line-height:20px;color:#262626;white-space:pre;letter-spacing:-0.082px;">0012_20140909_155314_True_North.qpd</span>
<div class="hdr" style="left:15px;width:336px;"></div>
<div class="hdr" style="left:351px;width:47px;"></div>
<div class="hdr" style="left:398px;width:210px;"></div>
<div class="hdr" style="left:608px;width:208px;"></div>
<div class="hdr" style="left:816px;width:213px;"></div>
<div class="hdr" style="left:1029px;width:122px;"></div>
<div class="hdr" style="left:1151px;width:833px;"></div>
<span style="position:absolute;left:134.5px;top:587.00px;font-size:15.8px;line-height:20px;color:#111;white-space:pre;letter-spacing:-0.271px;">Source File</span>
<div style="position:absolute;left:351px;top:582px;width:45px;height:24px;overflow:hidden;"><span style="position:absolute;left:0.9px;top:5.00px;font-size:15.8px;line-height:20px;color:#111;white-space:pre;letter-spacing:0.074px;">Folder</span></div>
<span style="position:absolute;left:467.4px;top:587.00px;font-size:15.8px;line-height:20px;color:#111;white-space:pre;letter-spacing:-0.099px;">Start Time</span>
<span style="position:absolute;left:679.0px;top:587.00px;font-size:15.8px;line-height:20px;color:#111;white-space:pre;letter-spacing:-0.221px;">End Time</span>
<span style="position:absolute;left:900.9px;top:587.00px;font-size:15.8px;line-height:20px;color:#111;white-space:pre;letter-spacing:-0.508px;">Vessel</span>
<span style="position:absolute;left:1058.9px;top:587.00px;font-size:15.8px;line-height:20px;color:#111;white-space:pre;letter-spacing:-0.291px;">File Type</span>
<span style="position:absolute;left:1536.6px;top:587.00px;font-size:15.8px;line-height:20px;color:#111;white-space:pre;letter-spacing:-0.507px;">QPD File</span>
<svg style="position:absolute;left:334.90000000000003px;top:591.1999999999999px;overflow:visible" width="7.4" height="4.2" viewBox="0 0 7.4 4.2"><path d="M0 0H7.4L3.7 4.2Z" fill="#3a3a3a"/></svg>
<div style="position:absolute;left:1982px;top:581px;width:1px;height:408px;background:#c4c4c4;"></div>
<div style="position:absolute;left:1983px;top:581px;width:21px;height:408px;background:#e8e8e8;border-left:1px solid #bcbcbc;"></div>
<div style="position:absolute;left:1984px;top:581px;width:20px;height:21px;background:linear-gradient(90deg,#fdfdfd,#f0f0f0);border-bottom:1px solid #cfcfcf;"></div>
<svg style="position:absolute;left:1990.0px;top:590.0px;overflow:visible" width="8" height="4.4" viewBox="0 0 8 4.4"><path d="M0 4.4H8L4.0 0Z" fill="#4a4a4a"/></svg>
<div style="position:absolute;left:1984px;top:602px;width:20px;height:309px;background:linear-gradient(90deg,#f3f3f3,#ffffff 55%,#f6f6f6);border-bottom:1px solid #c6c6c6;"></div>
<div style="position:absolute;left:1984px;top:968px;width:20px;height:21px;background:linear-gradient(90deg,#fdfdfd,#f0f0f0);border-top:1px solid #cfcfcf;"></div>
<svg style="position:absolute;left:1990.0px;top:976.8px;overflow:visible" width="8" height="4.4" viewBox="0 0 8 4.4"><path d="M0 0H8L4.0 4.4Z" fill="#4a4a4a"/></svg>
</div>
<div style="position:absolute;left:14px;top:989px;width:1991px;height:1px;background:#bcbcbc;"></div>
<div style="position:absolute;left:8px;top:995px;width:2002px;height:1px;background:#c9c9c9;"></div>
<div style="position:absolute;left:8px;top:998px;width:2002px;height:1px;background:#d4d4d4;"></div>
<div style="position:absolute;left:8px;top:999px;width:2002px;height:1px;background:#dfdfdf;"></div>
<div style="position:absolute;left:8px;top:998px;width:1px;height:2px;background:#bdbdbd;"></div>
<div style="position:absolute;left:121px;top:998px;width:1px;height:2px;background:#bdbdbd;"></div>
<div style="position:absolute;left:304px;top:998px;width:1px;height:2px;background:#bdbdbd;"></div>
<div style="position:absolute;left:558px;top:998px;width:1px;height:2px;background:#bdbdbd;"></div>
<div style="position:absolute;left:657px;top:998px;width:1px;height:2px;background:#bdbdbd;"></div>
<div style="position:absolute;left:800px;top:998px;width:1px;height:2px;background:#bdbdbd;"></div>
<div style="position:absolute;left:1000px;top:998px;width:1px;height:2px;background:#bdbdbd;"></div>
<div style="position:absolute;left:1200px;top:998px;width:1px;height:2px;background:#bdbdbd;"></div>
<div style="position:absolute;left:876px;top:425px;width:344px;height:77px;border:5px solid #ec1c24;"></div>
<div style="position:absolute;left:384px;top:580px;width:439px;height:412px;border:5px solid #ec1c24;"></div>
</div></body></html>
